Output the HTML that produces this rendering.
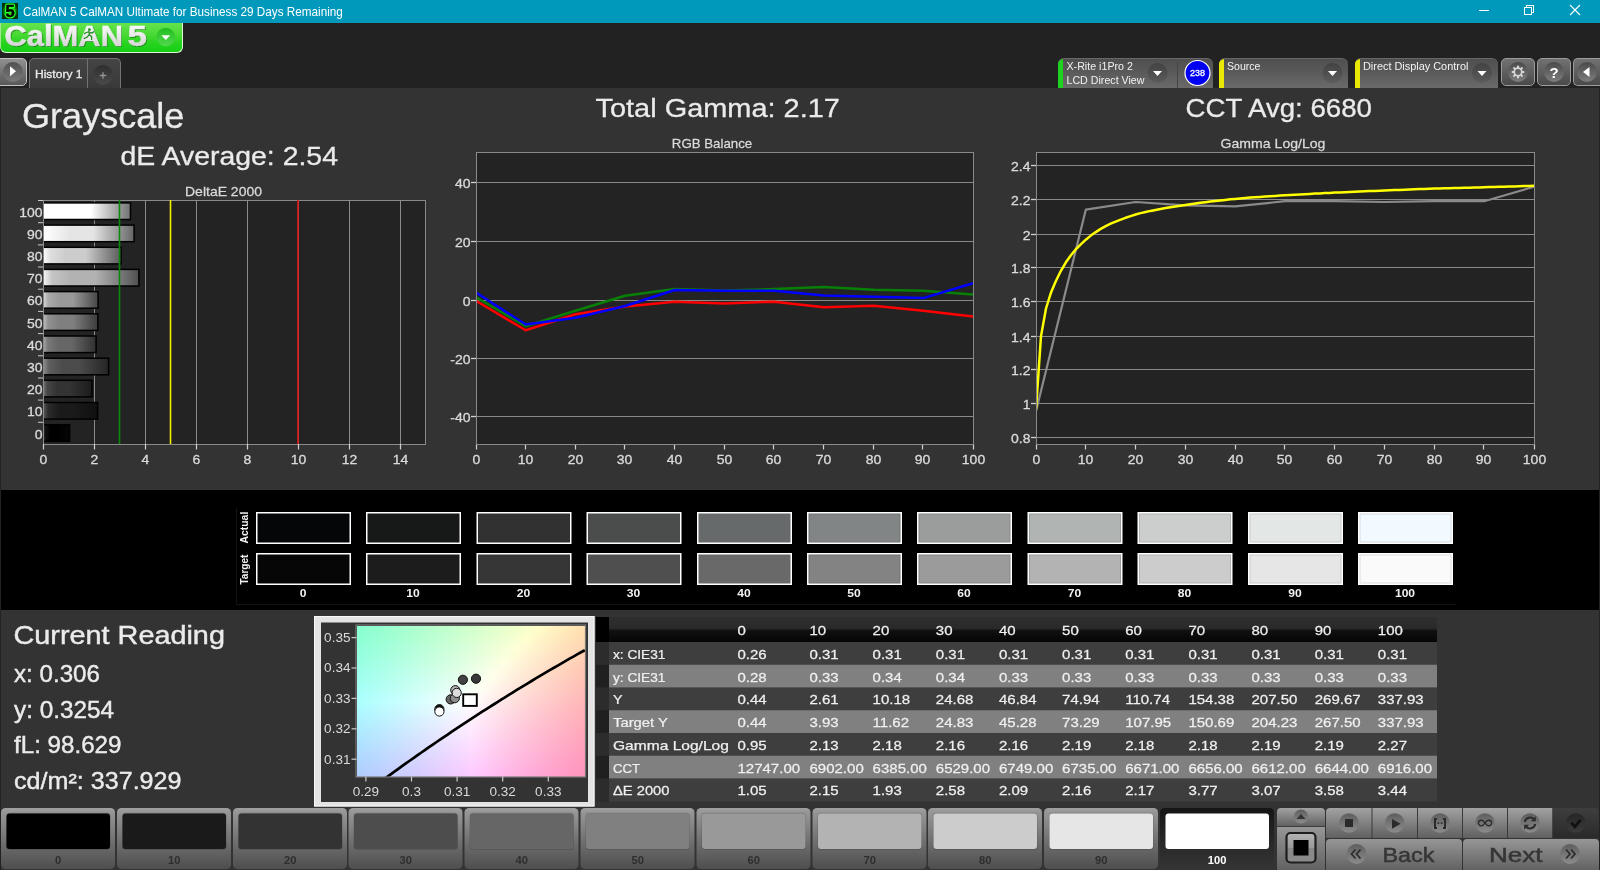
<!DOCTYPE html>
<html><head><meta charset="utf-8"><title>CalMAN 5</title>
<style>
*{margin:0;padding:0;box-sizing:border-box}
html,body{width:1600px;height:870px;overflow:hidden;background:#222222;font-family:"Liberation Sans",sans-serif;color:#e6e6e6}
.abs{position:absolute}
.t{position:absolute;white-space:nowrap;line-height:1}
svg{position:absolute;left:0;top:0;overflow:visible;will-change:transform}
#titlebar{position:absolute;left:0;top:0;width:1600px;height:23px;background:#0099bc}
#main{position:absolute;left:1px;top:88px;width:1598px;height:782px;background:#333}
#band{position:absolute;left:1px;top:490px;width:1598px;height:120px;background:#000}
</style></head><body>
<div id="titlebar"></div>
<div id="main"></div>
<div id="band"></div>
<!-- title bar + toolbar -->
<style>
.dtab{position:absolute;top:58px;height:30px;border-radius:6px 6px 0 0;background:linear-gradient(#4f4f4f 0%,#5b5b5b 50%,#6a6a6a 100%);border-top:1px solid #686868;overflow:hidden}
.dtab i{position:absolute;left:0;top:-1px;width:5px;height:32px}
.tbtn{position:absolute;top:58px;height:28px;border-radius:5px;background:linear-gradient(#727272,#4a4a4a);border:1px solid #9c9c9c}
</style>
<div class="abs" style="left:0;top:23px;width:183px;height:30px;border-radius:0 0 6px 6px;background:linear-gradient(#66e34e 0%,#48d934 40%,#22d21c 75%,#16cf16 100%);border:1px solid #dcf7d4;border-top:none;border-left:1px solid #9fe890"></div>
<div class="abs" style="left:-4px;top:58px;width:31px;height:28px;border-radius:5px;background:linear-gradient(#909090,#585858);border:1px solid #c4c4c4"></div>
<div class="abs" style="left:29px;top:58px;width:92px;height:30px;border-radius:5px 5px 0 0;background:linear-gradient(#454545,#393939);border:1px solid #727272;border-bottom:none"></div>
<div class="abs" style="left:87px;top:59px;width:1px;height:29px;background:#727272"></div>
<div class="dtab" style="left:1058px;width:155px"><i style="background:#1fd11f"></i></div>
<div class="abs" style="left:1177px;top:62px;width:1px;height:26px;background:#454545"></div>
<div class="dtab" style="left:1219px;width:129px"><i style="background:#e8e800"></i></div>
<div class="dtab" style="left:1355px;width:143px"><i style="background:#e8e800"></i></div>
<div class="tbtn" style="left:1501px;width:34px"></div>
<div class="tbtn" style="left:1537px;width:34px"></div>
<div class="tbtn" style="left:1573px;width:27px;border-right:none;border-radius:5px 0 0 5px"></div>
<svg width="1600" height="90" font-family="Liberation Sans" fill="#f2f2f2">
<defs>
<linearGradient id="lg" x1="0" x2="0" y1="0" y2="1"><stop offset="0" stop-color="#ffffff"/><stop offset=".45" stop-color="#ececec"/><stop offset="1" stop-color="#c9c9c9"/></linearGradient>
<linearGradient id="dc" x1="0" x2="0" y1="0" y2="1"><stop offset="0" stop-color="#424242"/><stop offset="1" stop-color="#5c5c5c"/></linearGradient>
<linearGradient id="bc" x1="0" x2="0" y1="0" y2="1"><stop offset="0" stop-color="#4a4a4a"/><stop offset="1" stop-color="#7e7e7e"/></linearGradient>
<linearGradient id="pc" x1="0" x2="0" y1="0" y2="1"><stop offset="0" stop-color="#2e2e2e"/><stop offset="1" stop-color="#4a4a4a"/></linearGradient>
<radialGradient id="ig"><stop offset="0" stop-color="#20ff20"/><stop offset=".6" stop-color="#12c812"/><stop offset="1" stop-color="#053a05"/></radialGradient>
</defs>
<rect x="2" y="3" width="16" height="16" fill="#021002"/><rect x="2" y="3" width="16" height="16" fill="url(#ig)" opacity=".8"/>
<text x="10" y="17.3" font-weight="bold" font-size="16.5" fill="#28ff28" text-anchor="middle" stroke="#28ff28" stroke-width="3" stroke-linejoin="round">5</text>
<text x="10" y="17.3" font-weight="bold" font-size="16.5" fill="#000" stroke="#000" stroke-width=".5" text-anchor="middle">5</text>
<text transform="translate(23 15.8) scale(0.977 1)" font-size="12" fill="#fff">CalMAN 5 CalMAN Ultimate for Business 29 Days Remaining</text>
<g stroke="#fff" stroke-width="1" fill="none" shape-rendering="crispEdges">
<line x1="1479" y1="10.5" x2="1489" y2="10.5"/><rect x="1524.5" y="7.5" width="7" height="7"/>
<polyline points="1526.5,7.5 1526.5,5.5 1533.5,5.5 1533.5,12.5 1531.5,12.5"/></g>
<g stroke="#fff" stroke-width="1.1" fill="none"><line x1="1570" y1="5" x2="1580" y2="15"/><line x1="1580" y1="5" x2="1570" y2="15"/></g>
<text transform="translate(5.7 47.1) scale(1.066 1)" font-size="29" fill="#145c10" font-weight="bold" opacity="0.5">CalMAN</text>
<text transform="translate(128.7 47.1) scale(1.209 1)" font-size="29" fill="#145c10" font-weight="bold" opacity="0.5">5</text>
<text transform="translate(4.8 47.4) scale(1.066 1)" font-size="29" fill="#145c10" font-weight="bold" opacity="0.35">CalMAN</text>
<text transform="translate(127.8 47.4) scale(1.209 1)" font-size="29" fill="#145c10" font-weight="bold" opacity="0.35">5</text>
<text transform="translate(4.5 45.8) scale(1.066 1)" font-size="29" fill="url(#lg)" font-weight="bold" stroke="url(#lg)" stroke-width=".5">CalMAN</text>
<text transform="translate(127.5 45.8) scale(1.209 1)" font-size="29" fill="url(#lg)" font-weight="bold" stroke="url(#lg)" stroke-width=".5">5</text>
<path d="M89.5 27.500L84.8 40.800h9.600z" fill="#ececec"/>
<g fill="none" stroke="#1f8f1f" stroke-width="1.3" stroke-linecap="round" stroke-linejoin="round"><path d="M89 31.600l.4 3.300M88 32l-2.8 1l-.5 .7M89.4 32.300l2.5 .8l2-1.400M89 34.900l-1.9 2.300l-2.9 1.300M89.4 34.900l2.2 1.600v2.9"/></g><circle cx="89.4" cy="29.7" r="1.4" fill="#1f8f1f"/>
<defs><linearGradient id="dg" x1="0" x2="0" y1="0" y2="1"><stop offset="0" stop-color="#1fbd1f"/><stop offset="1" stop-color="#52d94e"/></linearGradient></defs>
<circle cx="165.8" cy="37" r="9.3" fill="url(#dg)"/><path d="M161.3 35.300h9l-4.5 4.800z" fill="#fff"/>
<circle cx="13" cy="72" r="10" fill="url(#bc)" opacity=".9"/><path d="M10 66.300v10l6-5z" fill="#fff"/>
<text transform="translate(35 78.2) scale(1.065 1)" font-size="11.3" fill="#ececec" stroke="#ececec" stroke-width=".3">History 1</text>
<circle cx="103" cy="75" r="10" fill="url(#pc)"/><path d="M99.8 75.500h6.400M103 72.300v6.4" stroke="#949494" stroke-width="1.3"/>
<text transform="translate(1066.5 69.7) scale(1.068 1)" font-size="10">X-Rite i1Pro 2</text>
<text transform="translate(1066.5 83.8) scale(1.066 1)" font-size="10">LCD Direct View</text>
<text transform="translate(1227 69.7) scale(1.057 1)" font-size="10">Source</text>
<text transform="translate(1363 69.6) scale(1.091 1)" font-size="10">Direct Display Control</text>
<g fill="url(#dc)"><circle cx="1157.5" cy="73" r="10"/><circle cx="1332.5" cy="73" r="10"/><circle cx="1482" cy="73" r="10"/></g>
<g fill="#fff"><path d="M1153 71h9l-4.5 5z"/><path d="M1328 71h9l-4.5 5z"/><path d="M1477.5 71h9l-4.5 5z"/></g>
<circle cx="1197.5" cy="73" r="12.5" fill="#0000f2" stroke="#fff" stroke-width="1.2"/>
<text transform="translate(1197.5 76.2) scale(1.0 1)" font-size="9" text-anchor="middle" fill="#fff" stroke="#fff" stroke-width=".3">238</text>
<g fill="url(#bc)"><circle cx="1518" cy="72" r="10"/><circle cx="1554" cy="72" r="10"/><circle cx="1587" cy="72" r="10"/></g>
<g transform="translate(1518,72) scale(.9)" fill="none" stroke="#d6d6d6"><circle r="4.2" stroke-width="2"/>
<g stroke-width="2.3"><line y1="-4.5" y2="-7"/><line y1="4.5" y2="7"/><line x1="-4.5" x2="-7"/><line x1="4.5" x2="7"/>
<line x1="3.2" y1="3.2" x2="5" y2="5"/><line x1="-3.2" y1="3.2" x2="-5" y2="5"/><line x1="3.2" y1="-3.2" x2="5" y2="-5"/><line x1="-3.2" y1="-3.2" x2="-5" y2="-5"/></g></g>
<text x="1554" y="77.5" font-weight="bold" font-size="15" fill="#fff" text-anchor="middle">?</text>
<path d="M1589.5 67v10l-6.5-5z" fill="#fff"/>
</svg>
<svg width="1600" height="870" font-family="Liberation Sans" font-size="12" fill="#dadada">
<text transform="translate(22 128) scale(1.031 1)" font-size="35" fill="#ebebeb" stroke="#ebebeb" stroke-width=".3">Grayscale</text>
<text transform="translate(120.5 164.5) scale(1.137 1)" font-size="25" fill="#ebebeb" stroke="#ebebeb" stroke-width=".3">dE Average: 2.54</text>
<text transform="translate(595.5 117.3) scale(1.113 1)" font-size="26" fill="#ebebeb" stroke="#ebebeb" stroke-width=".3">Total Gamma: 2.17</text>
<text transform="translate(1185.5 117.3) scale(1.063 1)" font-size="26" fill="#ebebeb" stroke="#ebebeb" stroke-width=".3">CCT Avg: 6680</text>
<rect x="43" y="200" width="382" height="244" fill="#232323"/>
<text transform="translate(223.5 196.3) scale(1.076 1)" font-size="13" text-anchor="middle" stroke="#dadada" stroke-width=".25">DeltaE 2000</text>
<line x1="94.5" y1="200" x2="94.5" y2="444" stroke="#8a8a8a" stroke-width="1"/>
<line x1="145.5" y1="200" x2="145.5" y2="444" stroke="#8a8a8a" stroke-width="1"/>
<line x1="196.5" y1="200" x2="196.5" y2="444" stroke="#8a8a8a" stroke-width="1"/>
<line x1="247.5" y1="200" x2="247.5" y2="444" stroke="#8a8a8a" stroke-width="1"/>
<line x1="298.5" y1="200" x2="298.5" y2="444" stroke="#8a8a8a" stroke-width="1"/>
<line x1="349.5" y1="200" x2="349.5" y2="444" stroke="#8a8a8a" stroke-width="1"/>
<line x1="400.5" y1="200" x2="400.5" y2="444" stroke="#8a8a8a" stroke-width="1"/>
<rect x="43.5" y="200.5" width="382" height="244" fill="none" stroke="#8a8a8a"/>
<defs>
<linearGradient id="b100" x1="0" x2="1" y1="0" y2="0"><stop offset="0" stop-color="rgb(255,255,255)"/><stop offset=".1" stop-color="rgb(255,255,255)"/><stop offset=".3" stop-color="rgb(255,255,255)"/><stop offset=".55" stop-color="rgb(255,255,255)"/><stop offset="1" stop-color="rgb(113,113,113)"/></linearGradient>
<linearGradient id="b90" x1="0" x2="1" y1="0" y2="0"><stop offset="0" stop-color="rgb(255,255,255)"/><stop offset=".1" stop-color="rgb(247,247,247)"/><stop offset=".3" stop-color="rgb(229,229,229)"/><stop offset=".55" stop-color="rgb(229,229,229)"/><stop offset="1" stop-color="rgb(102,102,102)"/></linearGradient>
<linearGradient id="b80" x1="0" x2="1" y1="0" y2="0"><stop offset="0" stop-color="rgb(255,255,255)"/><stop offset=".1" stop-color="rgb(222,222,222)"/><stop offset=".3" stop-color="rgb(204,204,204)"/><stop offset=".55" stop-color="rgb(204,204,204)"/><stop offset="1" stop-color="rgb(91,91,91)"/></linearGradient>
<linearGradient id="b70" x1="0" x2="1" y1="0" y2="0"><stop offset="0" stop-color="rgb(250,250,250)"/><stop offset=".1" stop-color="rgb(196,196,196)"/><stop offset=".3" stop-color="rgb(178,178,178)"/><stop offset=".55" stop-color="rgb(178,178,178)"/><stop offset="1" stop-color="rgb(80,80,80)"/></linearGradient>
<linearGradient id="b60" x1="0" x2="1" y1="0" y2="0"><stop offset="0" stop-color="rgb(225,225,225)"/><stop offset=".1" stop-color="rgb(171,171,171)"/><stop offset=".3" stop-color="rgb(153,153,153)"/><stop offset=".55" stop-color="rgb(153,153,153)"/><stop offset="1" stop-color="rgb(70,70,70)"/></linearGradient>
<linearGradient id="b50" x1="0" x2="1" y1="0" y2="0"><stop offset="0" stop-color="rgb(199,199,199)"/><stop offset=".1" stop-color="rgb(145,145,145)"/><stop offset=".3" stop-color="rgb(127,127,127)"/><stop offset=".55" stop-color="rgb(127,127,127)"/><stop offset="1" stop-color="rgb(59,59,59)"/></linearGradient>
<linearGradient id="b40" x1="0" x2="1" y1="0" y2="0"><stop offset="0" stop-color="rgb(174,174,174)"/><stop offset=".1" stop-color="rgb(120,120,120)"/><stop offset=".3" stop-color="rgb(102,102,102)"/><stop offset=".55" stop-color="rgb(102,102,102)"/><stop offset="1" stop-color="rgb(48,48,48)"/></linearGradient>
<linearGradient id="b30" x1="0" x2="1" y1="0" y2="0"><stop offset="0" stop-color="rgb(148,148,148)"/><stop offset=".1" stop-color="rgb(94,94,94)"/><stop offset=".3" stop-color="rgb(76,76,76)"/><stop offset=".55" stop-color="rgb(76,76,76)"/><stop offset="1" stop-color="rgb(37,37,37)"/></linearGradient>
<linearGradient id="b20" x1="0" x2="1" y1="0" y2="0"><stop offset="0" stop-color="rgb(123,123,123)"/><stop offset=".1" stop-color="rgb(69,69,69)"/><stop offset=".3" stop-color="rgb(51,51,51)"/><stop offset=".55" stop-color="rgb(51,51,51)"/><stop offset="1" stop-color="rgb(27,27,27)"/></linearGradient>
<linearGradient id="b10" x1="0" x2="1" y1="0" y2="0"><stop offset="0" stop-color="rgb(98,98,98)"/><stop offset=".1" stop-color="rgb(44,44,44)"/><stop offset=".3" stop-color="rgb(26,26,26)"/><stop offset=".55" stop-color="rgb(26,26,26)"/><stop offset="1" stop-color="rgb(16,16,16)"/></linearGradient>
<linearGradient id="b0" x1="0" x2="1" y1="0" y2="0"><stop offset="0" stop-color="rgb(72,72,72)"/><stop offset=".1" stop-color="rgb(18,18,18)"/><stop offset=".3" stop-color="rgb(0,0,0)"/><stop offset=".55" stop-color="rgb(0,0,0)"/><stop offset="1" stop-color="rgb(6,6,6)"/></linearGradient>
</defs>
<clipPath id="cD"><rect x="44" y="200" width="382" height="244"/></clipPath>
<rect clip-path="url(#cD)" x="42.5" y="202.9" width="88.0" height="16.6" fill="url(#b100)" stroke="#000" stroke-width="1.5"/>
<text transform="translate(42.5 216.691) scale(1.120 1)" font-size="12.5" text-anchor="end" stroke="#dadada" stroke-width=".3">100</text>
<line x1="38" y1="200.5" x2="43" y2="200.5" stroke="#ccc"/>
<rect clip-path="url(#cD)" x="42.5" y="225.1" width="91.6" height="16.6" fill="url(#b90)" stroke="#000" stroke-width="1.5"/>
<text transform="translate(42.5 238.873) scale(1.120 1)" font-size="12.5" text-anchor="end" stroke="#dadada" stroke-width=".3">90</text>
<line x1="38" y1="222.7" x2="43" y2="222.7" stroke="#ccc"/>
<rect clip-path="url(#cD)" x="42.5" y="247.3" width="78.6" height="16.6" fill="url(#b80)" stroke="#000" stroke-width="1.5"/>
<text transform="translate(42.5 261.055) scale(1.120 1)" font-size="12.5" text-anchor="end" stroke="#dadada" stroke-width=".3">80</text>
<line x1="38" y1="244.9" x2="43" y2="244.9" stroke="#ccc"/>
<rect clip-path="url(#cD)" x="42.5" y="269.4" width="96.4" height="16.6" fill="url(#b70)" stroke="#000" stroke-width="1.5"/>
<text transform="translate(42.5 283.236) scale(1.120 1)" font-size="12.5" text-anchor="end" stroke="#dadada" stroke-width=".3">70</text>
<line x1="38" y1="267.0" x2="43" y2="267.0" stroke="#ccc"/>
<rect clip-path="url(#cD)" x="42.5" y="291.6" width="55.6" height="16.6" fill="url(#b60)" stroke="#000" stroke-width="1.5"/>
<text transform="translate(42.5 305.418) scale(1.120 1)" font-size="12.5" text-anchor="end" stroke="#dadada" stroke-width=".3">60</text>
<line x1="38" y1="289.2" x2="43" y2="289.2" stroke="#ccc"/>
<rect clip-path="url(#cD)" x="42.5" y="313.8" width="55.4" height="16.6" fill="url(#b50)" stroke="#000" stroke-width="1.5"/>
<text transform="translate(42.5 327.6) scale(1.120 1)" font-size="12.5" text-anchor="end" stroke="#dadada" stroke-width=".3">50</text>
<line x1="38" y1="311.4" x2="43" y2="311.4" stroke="#ccc"/>
<rect clip-path="url(#cD)" x="42.5" y="336.0" width="53.6" height="16.6" fill="url(#b40)" stroke="#000" stroke-width="1.5"/>
<text transform="translate(42.5 349.782) scale(1.120 1)" font-size="12.5" text-anchor="end" stroke="#dadada" stroke-width=".3">40</text>
<line x1="38" y1="333.6" x2="43" y2="333.6" stroke="#ccc"/>
<rect clip-path="url(#cD)" x="42.5" y="358.2" width="66.1" height="16.6" fill="url(#b30)" stroke="#000" stroke-width="1.5"/>
<text transform="translate(42.5 371.964) scale(1.120 1)" font-size="12.5" text-anchor="end" stroke="#dadada" stroke-width=".3">30</text>
<line x1="38" y1="355.8" x2="43" y2="355.8" stroke="#ccc"/>
<rect clip-path="url(#cD)" x="42.5" y="380.3" width="49.5" height="16.6" fill="url(#b20)" stroke="#000" stroke-width="1.5"/>
<text transform="translate(42.5 394.145) scale(1.120 1)" font-size="12.5" text-anchor="end" stroke="#dadada" stroke-width=".3">20</text>
<line x1="38" y1="378.0" x2="43" y2="378.0" stroke="#ccc"/>
<rect clip-path="url(#cD)" x="42.5" y="402.5" width="55.1" height="16.6" fill="url(#b10)" stroke="#000" stroke-width="1.5"/>
<text transform="translate(42.5 416.327) scale(1.120 1)" font-size="12.5" text-anchor="end" stroke="#dadada" stroke-width=".3">10</text>
<line x1="38" y1="400.1" x2="43" y2="400.1" stroke="#ccc"/>
<rect clip-path="url(#cD)" x="42.5" y="424.7" width="27.1" height="16.6" fill="url(#b0)" stroke="#000" stroke-width="1.5"/>
<text transform="translate(42.5 438.509) scale(1.120 1)" font-size="12.5" text-anchor="end" stroke="#dadada" stroke-width=".3">0</text>
<line x1="38" y1="422.3" x2="43" y2="422.3" stroke="#ccc"/>
<line x1="119.5" y1="200" x2="119.5" y2="444" stroke="#0a8a0a" stroke-width="1.6"/>
<line x1="170.5" y1="200" x2="170.5" y2="444" stroke="#f0f000" stroke-width="1.6"/>
<line x1="298.0" y1="200" x2="298.0" y2="444" stroke="#e01818" stroke-width="1.6"/>
<line x1="43.5" y1="444" x2="43.5" y2="449.5" stroke="#d0d0d0" stroke-width="1.2"/>
<text transform="translate(43.5 464) scale(1.120 1)" font-size="12.5" text-anchor="middle" stroke="#dadada" stroke-width=".3">0</text>
<line x1="94.5" y1="444" x2="94.5" y2="449.5" stroke="#d0d0d0" stroke-width="1.2"/>
<text transform="translate(94.5 464) scale(1.120 1)" font-size="12.5" text-anchor="middle" stroke="#dadada" stroke-width=".3">2</text>
<line x1="145.5" y1="444" x2="145.5" y2="449.5" stroke="#d0d0d0" stroke-width="1.2"/>
<text transform="translate(145.5 464) scale(1.120 1)" font-size="12.5" text-anchor="middle" stroke="#dadada" stroke-width=".3">4</text>
<line x1="196.5" y1="444" x2="196.5" y2="449.5" stroke="#d0d0d0" stroke-width="1.2"/>
<text transform="translate(196.5 464) scale(1.120 1)" font-size="12.5" text-anchor="middle" stroke="#dadada" stroke-width=".3">6</text>
<line x1="247.5" y1="444" x2="247.5" y2="449.5" stroke="#d0d0d0" stroke-width="1.2"/>
<text transform="translate(247.5 464) scale(1.120 1)" font-size="12.5" text-anchor="middle" stroke="#dadada" stroke-width=".3">8</text>
<line x1="298.5" y1="444" x2="298.5" y2="449.5" stroke="#d0d0d0" stroke-width="1.2"/>
<text transform="translate(298.5 464) scale(1.120 1)" font-size="12.5" text-anchor="middle" stroke="#dadada" stroke-width=".3">10</text>
<line x1="349.5" y1="444" x2="349.5" y2="449.5" stroke="#d0d0d0" stroke-width="1.2"/>
<text transform="translate(349.5 464) scale(1.120 1)" font-size="12.5" text-anchor="middle" stroke="#dadada" stroke-width=".3">12</text>
<line x1="400.5" y1="444" x2="400.5" y2="449.5" stroke="#d0d0d0" stroke-width="1.2"/>
<text transform="translate(400.5 464) scale(1.120 1)" font-size="12.5" text-anchor="middle" stroke="#dadada" stroke-width=".3">14</text>
<rect x="476" y="152" width="497" height="292" fill="#232323"/>
<text transform="translate(712 148.3) scale(1.022 1)" font-size="13" text-anchor="middle" stroke="#dadada" stroke-width=".25">RGB Balance</text>
<line x1="476" y1="182.5" x2="973" y2="182.5" stroke="#8a8a8a"/>
<line x1="471" y1="182.5" x2="476" y2="182.5" stroke="#d0d0d0" stroke-width="1.3"/>
<text transform="translate(470.5 187.7) scale(1.120 1)" font-size="12.5" text-anchor="end" stroke="#dadada" stroke-width=".3">40</text>
<line x1="476" y1="241.5" x2="973" y2="241.5" stroke="#8a8a8a"/>
<line x1="471" y1="241.5" x2="476" y2="241.5" stroke="#d0d0d0" stroke-width="1.3"/>
<text transform="translate(470.5 246.7) scale(1.120 1)" font-size="12.5" text-anchor="end" stroke="#dadada" stroke-width=".3">20</text>
<line x1="476" y1="300.5" x2="973" y2="300.5" stroke="#8a8a8a"/>
<line x1="471" y1="300.5" x2="476" y2="300.5" stroke="#d0d0d0" stroke-width="1.3"/>
<text transform="translate(470.5 305.7) scale(1.120 1)" font-size="12.5" text-anchor="end" stroke="#dadada" stroke-width=".3">0</text>
<line x1="476" y1="358.5" x2="973" y2="358.5" stroke="#8a8a8a"/>
<line x1="471" y1="358.5" x2="476" y2="358.5" stroke="#d0d0d0" stroke-width="1.3"/>
<text transform="translate(470.5 363.7) scale(1.120 1)" font-size="12.5" text-anchor="end" stroke="#dadada" stroke-width=".3">-20</text>
<line x1="476" y1="416.5" x2="973" y2="416.5" stroke="#8a8a8a"/>
<line x1="471" y1="416.5" x2="476" y2="416.5" stroke="#d0d0d0" stroke-width="1.3"/>
<text transform="translate(470.5 421.7) scale(1.120 1)" font-size="12.5" text-anchor="end" stroke="#dadada" stroke-width=".3">-40</text>
<line x1="476.5" y1="444" x2="476.5" y2="449.5" stroke="#d0d0d0" stroke-width="1.2"/>
<text transform="translate(476.5 464) scale(1.120 1)" font-size="12.5" text-anchor="middle" stroke="#dadada" stroke-width=".3">0</text>
<line x1="525.5" y1="444" x2="525.5" y2="449.5" stroke="#d0d0d0" stroke-width="1.2"/>
<text transform="translate(525.5 464) scale(1.120 1)" font-size="12.5" text-anchor="middle" stroke="#dadada" stroke-width=".3">10</text>
<line x1="575.5" y1="444" x2="575.5" y2="449.5" stroke="#d0d0d0" stroke-width="1.2"/>
<text transform="translate(575.5 464) scale(1.120 1)" font-size="12.5" text-anchor="middle" stroke="#dadada" stroke-width=".3">20</text>
<line x1="624.5" y1="444" x2="624.5" y2="449.5" stroke="#d0d0d0" stroke-width="1.2"/>
<text transform="translate(624.5 464) scale(1.120 1)" font-size="12.5" text-anchor="middle" stroke="#dadada" stroke-width=".3">30</text>
<line x1="674.5" y1="444" x2="674.5" y2="449.5" stroke="#d0d0d0" stroke-width="1.2"/>
<text transform="translate(674.5 464) scale(1.120 1)" font-size="12.5" text-anchor="middle" stroke="#dadada" stroke-width=".3">40</text>
<line x1="724.5" y1="444" x2="724.5" y2="449.5" stroke="#d0d0d0" stroke-width="1.2"/>
<text transform="translate(724.5 464) scale(1.120 1)" font-size="12.5" text-anchor="middle" stroke="#dadada" stroke-width=".3">50</text>
<line x1="773.5" y1="444" x2="773.5" y2="449.5" stroke="#d0d0d0" stroke-width="1.2"/>
<text transform="translate(773.5 464) scale(1.120 1)" font-size="12.5" text-anchor="middle" stroke="#dadada" stroke-width=".3">60</text>
<line x1="823.5" y1="444" x2="823.5" y2="449.5" stroke="#d0d0d0" stroke-width="1.2"/>
<text transform="translate(823.5 464) scale(1.120 1)" font-size="12.5" text-anchor="middle" stroke="#dadada" stroke-width=".3">70</text>
<line x1="873.5" y1="444" x2="873.5" y2="449.5" stroke="#d0d0d0" stroke-width="1.2"/>
<text transform="translate(873.5 464) scale(1.120 1)" font-size="12.5" text-anchor="middle" stroke="#dadada" stroke-width=".3">80</text>
<line x1="922.5" y1="444" x2="922.5" y2="449.5" stroke="#d0d0d0" stroke-width="1.2"/>
<text transform="translate(922.5 464) scale(1.120 1)" font-size="12.5" text-anchor="middle" stroke="#dadada" stroke-width=".3">90</text>
<line x1="973.5" y1="444" x2="973.5" y2="449.5" stroke="#d0d0d0" stroke-width="1.2"/>
<text transform="translate(973.5 464) scale(1.120 1)" font-size="12.5" text-anchor="middle" stroke="#dadada" stroke-width=".3">100</text>
<clipPath id="cR"><rect x="476" y="152" width="498" height="292"/></clipPath>
<polyline clip-path="url(#cR)" points="476.0,297.3 525.7,326.2 575.4,310.7 625.1,295.8 674.8,289.1 724.5,290.5 774.2,289.1 823.9,287.0 873.6,289.7 923.3,290.8 973.0,294.6" fill="none" stroke="#088008" stroke-width="2.5" stroke-linejoin="round"/>
<polyline clip-path="url(#cR)" points="476.0,300.8 525.7,330.3 575.4,314.2 625.1,306.6 674.8,301.7 724.5,303.4 774.2,301.7 823.9,307.2 873.6,305.8 923.3,310.7 973.0,316.6" fill="none" stroke="#ff0000" stroke-width="2.5" stroke-linejoin="round"/>
<polyline clip-path="url(#cR)" points="476.0,292.6 525.7,324.5 575.4,317.7 625.1,306.0 674.8,290.0 724.5,290.8 774.2,290.8 823.9,295.5 873.6,296.7 923.3,298.1 973.0,283.2" fill="none" stroke="#0000ff" stroke-width="2.5" stroke-linejoin="round"/>
<rect x="476.5" y="152.5" width="497" height="292" fill="none" stroke="#8a8a8a"/>
<rect x="1036" y="152" width="498" height="292" fill="#232323"/>
<text transform="translate(1273 148.3) scale(1.084 1)" font-size="13" text-anchor="middle" stroke="#dadada" stroke-width=".25">Gamma Log/Log</text>
<line x1="1036" y1="165.5" x2="1534" y2="165.5" stroke="#8a8a8a"/>
<line x1="1031" y1="165.5" x2="1036" y2="165.5" stroke="#d0d0d0" stroke-width="1.3"/>
<text transform="translate(1030.5 170.7) scale(1.120 1)" font-size="12.5" text-anchor="end" stroke="#dadada" stroke-width=".3">2.4</text>
<line x1="1036" y1="199.5" x2="1534" y2="199.5" stroke="#8a8a8a"/>
<line x1="1031" y1="199.5" x2="1036" y2="199.5" stroke="#d0d0d0" stroke-width="1.3"/>
<text transform="translate(1030.5 204.7) scale(1.120 1)" font-size="12.5" text-anchor="end" stroke="#dadada" stroke-width=".3">2.2</text>
<line x1="1036" y1="234.5" x2="1534" y2="234.5" stroke="#8a8a8a"/>
<line x1="1031" y1="234.5" x2="1036" y2="234.5" stroke="#d0d0d0" stroke-width="1.3"/>
<text transform="translate(1030.5 239.7) scale(1.120 1)" font-size="12.5" text-anchor="end" stroke="#dadada" stroke-width=".3">2</text>
<line x1="1036" y1="267.5" x2="1534" y2="267.5" stroke="#8a8a8a"/>
<line x1="1031" y1="267.5" x2="1036" y2="267.5" stroke="#d0d0d0" stroke-width="1.3"/>
<text transform="translate(1030.5 272.7) scale(1.120 1)" font-size="12.5" text-anchor="end" stroke="#dadada" stroke-width=".3">1.8</text>
<line x1="1036" y1="301.5" x2="1534" y2="301.5" stroke="#8a8a8a"/>
<line x1="1031" y1="301.5" x2="1036" y2="301.5" stroke="#d0d0d0" stroke-width="1.3"/>
<text transform="translate(1030.5 306.7) scale(1.120 1)" font-size="12.5" text-anchor="end" stroke="#dadada" stroke-width=".3">1.6</text>
<line x1="1036" y1="336.5" x2="1534" y2="336.5" stroke="#8a8a8a"/>
<line x1="1031" y1="336.5" x2="1036" y2="336.5" stroke="#d0d0d0" stroke-width="1.3"/>
<text transform="translate(1030.5 341.7) scale(1.120 1)" font-size="12.5" text-anchor="end" stroke="#dadada" stroke-width=".3">1.4</text>
<line x1="1036" y1="369.5" x2="1534" y2="369.5" stroke="#8a8a8a"/>
<line x1="1031" y1="369.5" x2="1036" y2="369.5" stroke="#d0d0d0" stroke-width="1.3"/>
<text transform="translate(1030.5 374.7) scale(1.120 1)" font-size="12.5" text-anchor="end" stroke="#dadada" stroke-width=".3">1.2</text>
<line x1="1036" y1="403.5" x2="1534" y2="403.5" stroke="#8a8a8a"/>
<line x1="1031" y1="403.5" x2="1036" y2="403.5" stroke="#d0d0d0" stroke-width="1.3"/>
<text transform="translate(1030.5 408.7) scale(1.120 1)" font-size="12.5" text-anchor="end" stroke="#dadada" stroke-width=".3">1</text>
<line x1="1036" y1="437.5" x2="1534" y2="437.5" stroke="#8a8a8a"/>
<line x1="1031" y1="437.5" x2="1036" y2="437.5" stroke="#d0d0d0" stroke-width="1.3"/>
<text transform="translate(1030.5 442.7) scale(1.120 1)" font-size="12.5" text-anchor="end" stroke="#dadada" stroke-width=".3">0.8</text>
<line x1="1036.5" y1="444" x2="1036.5" y2="449.5" stroke="#d0d0d0" stroke-width="1.2"/>
<text transform="translate(1036.5 464) scale(1.120 1)" font-size="12.5" text-anchor="middle" stroke="#dadada" stroke-width=".3">0</text>
<line x1="1085.5" y1="444" x2="1085.5" y2="449.5" stroke="#d0d0d0" stroke-width="1.2"/>
<text transform="translate(1085.5 464) scale(1.120 1)" font-size="12.5" text-anchor="middle" stroke="#dadada" stroke-width=".3">10</text>
<line x1="1135.5" y1="444" x2="1135.5" y2="449.5" stroke="#d0d0d0" stroke-width="1.2"/>
<text transform="translate(1135.5 464) scale(1.120 1)" font-size="12.5" text-anchor="middle" stroke="#dadada" stroke-width=".3">20</text>
<line x1="1185.5" y1="444" x2="1185.5" y2="449.5" stroke="#d0d0d0" stroke-width="1.2"/>
<text transform="translate(1185.5 464) scale(1.120 1)" font-size="12.5" text-anchor="middle" stroke="#dadada" stroke-width=".3">30</text>
<line x1="1235.5" y1="444" x2="1235.5" y2="449.5" stroke="#d0d0d0" stroke-width="1.2"/>
<text transform="translate(1235.5 464) scale(1.120 1)" font-size="12.5" text-anchor="middle" stroke="#dadada" stroke-width=".3">40</text>
<line x1="1284.5" y1="444" x2="1284.5" y2="449.5" stroke="#d0d0d0" stroke-width="1.2"/>
<text transform="translate(1284.5 464) scale(1.120 1)" font-size="12.5" text-anchor="middle" stroke="#dadada" stroke-width=".3">50</text>
<line x1="1334.5" y1="444" x2="1334.5" y2="449.5" stroke="#d0d0d0" stroke-width="1.2"/>
<text transform="translate(1334.5 464) scale(1.120 1)" font-size="12.5" text-anchor="middle" stroke="#dadada" stroke-width=".3">60</text>
<line x1="1384.5" y1="444" x2="1384.5" y2="449.5" stroke="#d0d0d0" stroke-width="1.2"/>
<text transform="translate(1384.5 464) scale(1.120 1)" font-size="12.5" text-anchor="middle" stroke="#dadada" stroke-width=".3">70</text>
<line x1="1434.5" y1="444" x2="1434.5" y2="449.5" stroke="#d0d0d0" stroke-width="1.2"/>
<text transform="translate(1434.5 464) scale(1.120 1)" font-size="12.5" text-anchor="middle" stroke="#dadada" stroke-width=".3">80</text>
<line x1="1483.5" y1="444" x2="1483.5" y2="449.5" stroke="#d0d0d0" stroke-width="1.2"/>
<text transform="translate(1483.5 464) scale(1.120 1)" font-size="12.5" text-anchor="middle" stroke="#dadada" stroke-width=".3">90</text>
<line x1="1534.5" y1="444" x2="1534.5" y2="449.5" stroke="#d0d0d0" stroke-width="1.2"/>
<text transform="translate(1534.5 464) scale(1.120 1)" font-size="12.5" text-anchor="middle" stroke="#dadada" stroke-width=".3">100</text>
<clipPath id="cG"><rect x="1036" y="152" width="499" height="292"/></clipPath>
<polyline clip-path="url(#cG)" points="1036.0,411.2 1085.8,209.7 1135.6,202.0 1185.4,205.4 1235.2,206.3 1285.0,201.2 1334.8,201.2 1384.6,202.0 1434.4,201.2 1484.2,201.2 1534.0,186.8" fill="none" stroke="#8a8a8a" stroke-width="2.2" stroke-linejoin="round"/>
<polyline clip-path="url(#cG)" points="1036.0,409.1 1041.0,336.1 1046.0,308.5 1050.9,292.8 1055.9,281.0 1060.9,270.8 1065.9,262.3 1070.9,255.2 1075.8,249.4 1080.8,244.3 1085.8,239.7 1090.8,235.6 1095.8,232.1 1100.7,228.9 1105.7,226.1 1110.7,223.7 1115.7,221.6 1120.7,219.6 1125.6,217.8 1130.6,216.1 1135.6,214.5 1140.6,213.1 1145.6,212.0 1150.5,210.9 1155.5,209.9 1160.5,209.0 1165.5,208.1 1170.5,207.2 1175.4,206.4 1180.4,205.7 1185.4,205.0 1190.4,204.2 1195.4,203.5 1200.3,202.8 1205.3,202.2 1210.3,201.6 1215.3,201.0 1220.3,200.4 1225.2,199.9 1230.2,199.3 1235.2,198.9 1240.2,198.4 1245.2,198.0 1250.1,197.6 1255.1,197.3 1260.1,196.9 1265.1,196.6 1270.1,196.2 1275.0,195.9 1280.0,195.6 1285.0,195.3 1290.0,195.1 1295.0,194.8 1299.9,194.5 1304.9,194.2 1309.9,193.9 1314.9,193.6 1319.9,193.4 1324.8,193.1 1329.8,192.9 1334.8,192.6 1339.8,192.4 1344.8,192.2 1349.7,192.0 1354.7,191.7 1359.7,191.5 1364.7,191.3 1369.7,191.1 1374.6,190.9 1379.6,190.7 1384.6,190.5 1389.6,190.3 1394.6,190.1 1399.5,189.9 1404.5,189.7 1409.5,189.5 1414.5,189.3 1419.5,189.1 1424.4,188.9 1429.4,188.8 1434.4,188.6 1439.4,188.4 1444.4,188.3 1449.3,188.2 1454.3,188.0 1459.3,187.9 1464.3,187.8 1469.3,187.7 1474.2,187.5 1479.2,187.4 1484.2,187.3 1489.2,187.1 1494.2,187.0 1499.1,186.8 1504.1,186.7 1509.1,186.5 1514.1,186.4 1519.1,186.2 1524.0,186.1 1529.0,185.9 1534.0,185.8" fill="none" stroke="#ffff00" stroke-width="2.5" stroke-linejoin="round"/>
<rect x="1036.5" y="152.5" width="498" height="292" fill="none" stroke="#8a8a8a"/>
</svg>
<svg width="1600" height="870" font-family="Liberation Sans" font-size="12" fill="#e6e6e6">
<path d="M236.5 508V604.5H1456.5" fill="none" stroke="#141414"/>
<rect x="256.75" y="512.75" width="93.5" height="30.5" fill="#050608" stroke="#fff" stroke-width="1.5"/>
<rect x="256.75" y="553.75" width="93.5" height="30.5" fill="#060606" stroke="#fff" stroke-width="1.5"/>
<text transform="translate(303 597) scale(1.100 1)" font-size="11" text-anchor="middle" fill="#f2f2f2" font-weight="bold">0</text>
<rect x="366.75" y="512.75" width="93.5" height="30.5" fill="#171918" stroke="#fff" stroke-width="1.5"/>
<rect x="366.75" y="553.75" width="93.5" height="30.5" fill="#1c1c1c" stroke="#fff" stroke-width="1.5"/>
<text transform="translate(413 597) scale(1.100 1)" font-size="11" text-anchor="middle" fill="#f2f2f2" font-weight="bold">10</text>
<rect x="477.25" y="512.75" width="93.5" height="30.5" fill="#313131" stroke="#fff" stroke-width="1.5"/>
<rect x="477.25" y="553.75" width="93.5" height="30.5" fill="#363636" stroke="#fff" stroke-width="1.5"/>
<text transform="translate(523.5 597) scale(1.100 1)" font-size="11" text-anchor="middle" fill="#f2f2f2" font-weight="bold">20</text>
<rect x="587.25" y="512.75" width="93.5" height="30.5" fill="#4b4d4c" stroke="#fff" stroke-width="1.5"/>
<rect x="587.25" y="553.75" width="93.5" height="30.5" fill="#4f4f4f" stroke="#fff" stroke-width="1.5"/>
<text transform="translate(633.5 597) scale(1.100 1)" font-size="11" text-anchor="middle" fill="#f2f2f2" font-weight="bold">30</text>
<rect x="697.75" y="512.75" width="93.5" height="30.5" fill="#676a6a" stroke="#fff" stroke-width="1.5"/>
<rect x="697.75" y="553.75" width="93.5" height="30.5" fill="#696969" stroke="#fff" stroke-width="1.5"/>
<text transform="translate(744 597) scale(1.100 1)" font-size="11" text-anchor="middle" fill="#f2f2f2" font-weight="bold">40</text>
<rect x="807.75" y="512.75" width="93.5" height="30.5" fill="#828585" stroke="#fff" stroke-width="1.5"/>
<rect x="809" y="514" width="91" height="28" fill="none" stroke="#000" stroke-opacity=".12" stroke-width="1"/>
<rect x="807.75" y="553.75" width="93.5" height="30.5" fill="#838383" stroke="#fff" stroke-width="1.5"/>
<rect x="809" y="555" width="91" height="28" fill="none" stroke="#000" stroke-opacity=".12" stroke-width="1"/>
<text transform="translate(854 597) scale(1.100 1)" font-size="11" text-anchor="middle" fill="#f2f2f2" font-weight="bold">50</text>
<rect x="917.75" y="512.75" width="93.5" height="30.5" fill="#9a9d9c" stroke="#fff" stroke-width="1.5"/>
<rect x="919" y="514" width="91" height="28" fill="none" stroke="#000" stroke-opacity=".12" stroke-width="1"/>
<rect x="917.75" y="553.75" width="93.5" height="30.5" fill="#9b9b9b" stroke="#fff" stroke-width="1.5"/>
<rect x="919" y="555" width="91" height="28" fill="none" stroke="#000" stroke-opacity=".12" stroke-width="1"/>
<text transform="translate(964 597) scale(1.100 1)" font-size="11" text-anchor="middle" fill="#f2f2f2" font-weight="bold">60</text>
<rect x="1028.25" y="512.75" width="93.5" height="30.5" fill="#b0b4b2" stroke="#fff" stroke-width="1.5"/>
<rect x="1029.5" y="514" width="91" height="28" fill="none" stroke="#000" stroke-opacity=".12" stroke-width="1"/>
<rect x="1028.25" y="553.75" width="93.5" height="30.5" fill="#b3b3b3" stroke="#fff" stroke-width="1.5"/>
<rect x="1029.5" y="555" width="91" height="28" fill="none" stroke="#000" stroke-opacity=".12" stroke-width="1"/>
<text transform="translate(1074.5 597) scale(1.100 1)" font-size="11" text-anchor="middle" fill="#f2f2f2" font-weight="bold">70</text>
<rect x="1138.25" y="512.75" width="93.5" height="30.5" fill="#cbcecd" stroke="#fff" stroke-width="1.5"/>
<rect x="1139.5" y="514" width="91" height="28" fill="none" stroke="#000" stroke-opacity=".12" stroke-width="1"/>
<rect x="1138.25" y="553.75" width="93.5" height="30.5" fill="#cccccc" stroke="#fff" stroke-width="1.5"/>
<rect x="1139.5" y="555" width="91" height="28" fill="none" stroke="#000" stroke-opacity=".12" stroke-width="1"/>
<text transform="translate(1184.5 597) scale(1.100 1)" font-size="11" text-anchor="middle" fill="#f2f2f2" font-weight="bold">80</text>
<rect x="1248.75" y="512.75" width="93.5" height="30.5" fill="#e3e7e5" stroke="#fff" stroke-width="1.5"/>
<rect x="1250" y="514" width="91" height="28" fill="none" stroke="#000" stroke-opacity=".12" stroke-width="1"/>
<rect x="1248.75" y="553.75" width="93.5" height="30.5" fill="#e6e6e6" stroke="#fff" stroke-width="1.5"/>
<rect x="1250" y="555" width="91" height="28" fill="none" stroke="#000" stroke-opacity=".12" stroke-width="1"/>
<text transform="translate(1295 597) scale(1.100 1)" font-size="11" text-anchor="middle" fill="#f2f2f2" font-weight="bold">90</text>
<rect x="1358.75" y="512.75" width="93.5" height="30.5" fill="#f3faff" stroke="#fff" stroke-width="1.5"/>
<rect x="1360" y="514" width="91" height="28" fill="none" stroke="#000" stroke-opacity=".12" stroke-width="1"/>
<rect x="1358.75" y="553.75" width="93.5" height="30.5" fill="#fafafa" stroke="#fff" stroke-width="1.5"/>
<rect x="1360" y="555" width="91" height="28" fill="none" stroke="#000" stroke-opacity=".12" stroke-width="1"/>
<text transform="translate(1405 597) scale(1.100 1)" font-size="11" text-anchor="middle" fill="#f2f2f2" font-weight="bold">100</text>
<text transform="translate(247.8 543.5) rotate(-90) scale(1.02 1)" font-size="10.2" font-weight="bold" fill="#f2f2f2">Actual</text>
<text transform="translate(247.8 584.5) rotate(-90) scale(0.98 1)" font-size="10.2" font-weight="bold" fill="#f2f2f2">Target</text>
<text transform="translate(13.5 644) scale(1.153 1)" font-size="25" fill="#ebebeb" stroke="#ebebeb" stroke-width=".4">Current Reading</text>
<text transform="translate(14 681.5) scale(1.051 1)" font-size="23" fill="#ebebeb" stroke="#ebebeb" stroke-width=".4">x: 0.306</text>
<text transform="translate(14 717.5) scale(1.057 1)" font-size="23" fill="#ebebeb" stroke="#ebebeb" stroke-width=".4">y: 0.3254</text>
<text transform="translate(14 753) scale(1.051 1)" font-size="23" fill="#ebebeb" stroke="#ebebeb" stroke-width=".4">fL: 98.629</text>
<text transform="translate(14 789) scale(1.092 1)" font-size="23" fill="#ebebeb" stroke="#ebebeb" stroke-width=".4">cd/m²: 337.929</text>
<rect x="314" y="616" width="280.5" height="190.5" fill="#e4e4e4"/>
<rect x="314.5" y="616.5" width="279.5" height="189.5" fill="none" stroke="#f8f8f8" stroke-width="1"/>
<rect x="321" y="622.5" width="267" height="179.5" fill="#333"/>
</svg>
<svg width="1600" height="870" font-family="Liberation Sans" font-size="12" fill="#dadada">
<defs>
<linearGradient id="c0"><stop offset="0" stop-color="#87ffce"/><stop offset="0.05" stop-color="#8effce"/><stop offset="0.1" stop-color="#95ffce"/><stop offset="0.15" stop-color="#9cffce"/><stop offset="0.2" stop-color="#a3ffcd"/><stop offset="0.25" stop-color="#aaffcd"/><stop offset="0.3" stop-color="#b1ffcd"/><stop offset="0.35" stop-color="#b9ffcc"/><stop offset="0.4" stop-color="#c0ffcc"/><stop offset="0.45" stop-color="#c8ffcc"/><stop offset="0.5" stop-color="#d0ffcb"/><stop offset="0.55" stop-color="#d8ffcb"/><stop offset="0.6" stop-color="#e0ffcb"/><stop offset="0.65" stop-color="#e8ffca"/><stop offset="0.7" stop-color="#f0ffca"/><stop offset="0.75" stop-color="#f8ffca"/><stop offset="0.8" stop-color="#fffdc8"/><stop offset="0.85" stop-color="#fff5c1"/><stop offset="0.9" stop-color="#ffedbb"/><stop offset="0.95" stop-color="#ffe6b4"/><stop offset="1" stop-color="#ffdfaf"/></linearGradient>
<linearGradient id="c1"><stop offset="0" stop-color="#88ffd0"/><stop offset="0.05" stop-color="#8fffd0"/><stop offset="0.1" stop-color="#96ffd0"/><stop offset="0.15" stop-color="#9dffcf"/><stop offset="0.2" stop-color="#a4ffcf"/><stop offset="0.25" stop-color="#acffcf"/><stop offset="0.3" stop-color="#b3ffce"/><stop offset="0.35" stop-color="#bbffce"/><stop offset="0.4" stop-color="#c2ffce"/><stop offset="0.45" stop-color="#caffcd"/><stop offset="0.5" stop-color="#d2ffcd"/><stop offset="0.55" stop-color="#daffcd"/><stop offset="0.6" stop-color="#e2ffcc"/><stop offset="0.65" stop-color="#eaffcc"/><stop offset="0.7" stop-color="#f2ffcc"/><stop offset="0.75" stop-color="#faffcb"/><stop offset="0.8" stop-color="#fffbc8"/><stop offset="0.85" stop-color="#fff3c1"/><stop offset="0.9" stop-color="#ffecbb"/><stop offset="0.95" stop-color="#ffe4b5"/><stop offset="1" stop-color="#ffddaf"/></linearGradient>
<linearGradient id="c2"><stop offset="0" stop-color="#89ffd2"/><stop offset="0.05" stop-color="#90ffd2"/><stop offset="0.1" stop-color="#97ffd1"/><stop offset="0.15" stop-color="#9fffd1"/><stop offset="0.2" stop-color="#a6ffd1"/><stop offset="0.25" stop-color="#adffd0"/><stop offset="0.3" stop-color="#b5ffd0"/><stop offset="0.35" stop-color="#bcffd0"/><stop offset="0.4" stop-color="#c4ffd0"/><stop offset="0.45" stop-color="#cbffcf"/><stop offset="0.5" stop-color="#d3ffcf"/><stop offset="0.55" stop-color="#dbffcf"/><stop offset="0.6" stop-color="#e3ffce"/><stop offset="0.65" stop-color="#ecffce"/><stop offset="0.7" stop-color="#f4ffce"/><stop offset="0.75" stop-color="#fcffcd"/><stop offset="0.8" stop-color="#fff9c8"/><stop offset="0.85" stop-color="#fff1c2"/><stop offset="0.9" stop-color="#ffeabb"/><stop offset="0.95" stop-color="#ffe2b5"/><stop offset="1" stop-color="#ffdcaf"/></linearGradient>
<linearGradient id="c3"><stop offset="0" stop-color="#8bffd4"/><stop offset="0.05" stop-color="#92ffd3"/><stop offset="0.1" stop-color="#99ffd3"/><stop offset="0.15" stop-color="#a0ffd3"/><stop offset="0.2" stop-color="#a7ffd3"/><stop offset="0.25" stop-color="#afffd2"/><stop offset="0.3" stop-color="#b6ffd2"/><stop offset="0.35" stop-color="#beffd2"/><stop offset="0.4" stop-color="#c5ffd1"/><stop offset="0.45" stop-color="#cdffd1"/><stop offset="0.5" stop-color="#d5ffd1"/><stop offset="0.55" stop-color="#ddffd1"/><stop offset="0.6" stop-color="#e5ffd0"/><stop offset="0.65" stop-color="#edffd0"/><stop offset="0.7" stop-color="#f6ffd0"/><stop offset="0.75" stop-color="#feffcf"/><stop offset="0.8" stop-color="#fff7c9"/><stop offset="0.85" stop-color="#ffefc2"/><stop offset="0.9" stop-color="#ffe8bc"/><stop offset="0.95" stop-color="#ffe1b5"/><stop offset="1" stop-color="#ffdab0"/></linearGradient>
<linearGradient id="c4"><stop offset="0" stop-color="#8cffd5"/><stop offset="0.05" stop-color="#93ffd5"/><stop offset="0.1" stop-color="#9affd5"/><stop offset="0.15" stop-color="#a1ffd5"/><stop offset="0.2" stop-color="#a9ffd4"/><stop offset="0.25" stop-color="#b0ffd4"/><stop offset="0.3" stop-color="#b8ffd4"/><stop offset="0.35" stop-color="#bfffd4"/><stop offset="0.4" stop-color="#c7ffd3"/><stop offset="0.45" stop-color="#cfffd3"/><stop offset="0.5" stop-color="#d7ffd3"/><stop offset="0.55" stop-color="#dfffd2"/><stop offset="0.6" stop-color="#e7ffd2"/><stop offset="0.65" stop-color="#efffd2"/><stop offset="0.7" stop-color="#f8ffd2"/><stop offset="0.75" stop-color="#fffed0"/><stop offset="0.8" stop-color="#fff5c9"/><stop offset="0.85" stop-color="#ffeec2"/><stop offset="0.9" stop-color="#ffe6bc"/><stop offset="0.95" stop-color="#ffdfb6"/><stop offset="1" stop-color="#ffd8b0"/></linearGradient>
<linearGradient id="c5"><stop offset="0" stop-color="#8dffd7"/><stop offset="0.05" stop-color="#94ffd7"/><stop offset="0.1" stop-color="#9cffd7"/><stop offset="0.15" stop-color="#a3ffd7"/><stop offset="0.2" stop-color="#aaffd6"/><stop offset="0.25" stop-color="#b2ffd6"/><stop offset="0.3" stop-color="#b9ffd6"/><stop offset="0.35" stop-color="#c1ffd5"/><stop offset="0.4" stop-color="#c9ffd5"/><stop offset="0.45" stop-color="#d1ffd5"/><stop offset="0.5" stop-color="#d9ffd5"/><stop offset="0.55" stop-color="#e1ffd4"/><stop offset="0.6" stop-color="#e9ffd4"/><stop offset="0.65" stop-color="#f1ffd4"/><stop offset="0.7" stop-color="#faffd4"/><stop offset="0.75" stop-color="#fffcd0"/><stop offset="0.8" stop-color="#fff3c9"/><stop offset="0.85" stop-color="#ffecc3"/><stop offset="0.9" stop-color="#ffe4bc"/><stop offset="0.95" stop-color="#ffddb6"/><stop offset="1" stop-color="#ffd6b0"/></linearGradient>
<linearGradient id="c6"><stop offset="0" stop-color="#8fffd9"/><stop offset="0.05" stop-color="#96ffd9"/><stop offset="0.1" stop-color="#9dffd9"/><stop offset="0.15" stop-color="#a4ffd8"/><stop offset="0.2" stop-color="#acffd8"/><stop offset="0.25" stop-color="#b3ffd8"/><stop offset="0.3" stop-color="#bbffd8"/><stop offset="0.35" stop-color="#c3ffd7"/><stop offset="0.4" stop-color="#caffd7"/><stop offset="0.45" stop-color="#d2ffd7"/><stop offset="0.5" stop-color="#daffd7"/><stop offset="0.55" stop-color="#e3ffd6"/><stop offset="0.6" stop-color="#ebffd6"/><stop offset="0.65" stop-color="#f3ffd6"/><stop offset="0.7" stop-color="#fcffd6"/><stop offset="0.75" stop-color="#fffad1"/><stop offset="0.8" stop-color="#fff2ca"/><stop offset="0.85" stop-color="#ffeac3"/><stop offset="0.9" stop-color="#ffe2bd"/><stop offset="0.95" stop-color="#ffdbb6"/><stop offset="1" stop-color="#ffd5b1"/></linearGradient>
<linearGradient id="c7"><stop offset="0" stop-color="#90ffdb"/><stop offset="0.05" stop-color="#97ffdb"/><stop offset="0.1" stop-color="#9effda"/><stop offset="0.15" stop-color="#a6ffda"/><stop offset="0.2" stop-color="#adffda"/><stop offset="0.25" stop-color="#b5ffda"/><stop offset="0.3" stop-color="#bcffda"/><stop offset="0.35" stop-color="#c4ffd9"/><stop offset="0.4" stop-color="#ccffd9"/><stop offset="0.45" stop-color="#d4ffd9"/><stop offset="0.5" stop-color="#dcffd9"/><stop offset="0.55" stop-color="#e4ffd8"/><stop offset="0.6" stop-color="#edffd8"/><stop offset="0.65" stop-color="#f5ffd8"/><stop offset="0.7" stop-color="#feffd8"/><stop offset="0.75" stop-color="#fff8d1"/><stop offset="0.8" stop-color="#fff0ca"/><stop offset="0.85" stop-color="#ffe8c3"/><stop offset="0.9" stop-color="#ffe1bd"/><stop offset="0.95" stop-color="#ffdab7"/><stop offset="1" stop-color="#ffd3b1"/></linearGradient>
<linearGradient id="c8"><stop offset="0" stop-color="#91ffdd"/><stop offset="0.05" stop-color="#99ffdd"/><stop offset="0.1" stop-color="#a0ffdc"/><stop offset="0.15" stop-color="#a7ffdc"/><stop offset="0.2" stop-color="#afffdc"/><stop offset="0.25" stop-color="#b6ffdc"/><stop offset="0.3" stop-color="#beffdb"/><stop offset="0.35" stop-color="#c6ffdb"/><stop offset="0.4" stop-color="#ceffdb"/><stop offset="0.45" stop-color="#d6ffdb"/><stop offset="0.5" stop-color="#deffdb"/><stop offset="0.55" stop-color="#e6ffda"/><stop offset="0.6" stop-color="#efffda"/><stop offset="0.65" stop-color="#f7ffda"/><stop offset="0.7" stop-color="#fffed9"/><stop offset="0.75" stop-color="#fff6d1"/><stop offset="0.8" stop-color="#ffeeca"/><stop offset="0.85" stop-color="#ffe6c4"/><stop offset="0.9" stop-color="#ffdfbd"/><stop offset="0.95" stop-color="#ffd8b7"/><stop offset="1" stop-color="#ffd1b1"/></linearGradient>
<linearGradient id="c9"><stop offset="0" stop-color="#93ffdf"/><stop offset="0.05" stop-color="#9affde"/><stop offset="0.1" stop-color="#a1ffde"/><stop offset="0.15" stop-color="#a9ffde"/><stop offset="0.2" stop-color="#b0ffde"/><stop offset="0.25" stop-color="#b8ffde"/><stop offset="0.3" stop-color="#c0ffdd"/><stop offset="0.35" stop-color="#c8ffdd"/><stop offset="0.4" stop-color="#d0ffdd"/><stop offset="0.45" stop-color="#d8ffdd"/><stop offset="0.5" stop-color="#e0ffdd"/><stop offset="0.55" stop-color="#e8ffdc"/><stop offset="0.6" stop-color="#f1ffdc"/><stop offset="0.65" stop-color="#f9ffdc"/><stop offset="0.7" stop-color="#fffcd9"/><stop offset="0.75" stop-color="#fff4d2"/><stop offset="0.8" stop-color="#ffeccb"/><stop offset="0.85" stop-color="#ffe4c4"/><stop offset="0.9" stop-color="#ffddbe"/><stop offset="0.95" stop-color="#ffd6b7"/><stop offset="1" stop-color="#ffd0b2"/></linearGradient>
<linearGradient id="c10"><stop offset="0" stop-color="#94ffe1"/><stop offset="0.05" stop-color="#9bffe0"/><stop offset="0.1" stop-color="#a3ffe0"/><stop offset="0.15" stop-color="#aaffe0"/><stop offset="0.2" stop-color="#b2ffe0"/><stop offset="0.25" stop-color="#baffe0"/><stop offset="0.3" stop-color="#c1ffdf"/><stop offset="0.35" stop-color="#c9ffdf"/><stop offset="0.4" stop-color="#d1ffdf"/><stop offset="0.45" stop-color="#daffdf"/><stop offset="0.5" stop-color="#e2ffdf"/><stop offset="0.55" stop-color="#eaffde"/><stop offset="0.6" stop-color="#f3ffde"/><stop offset="0.65" stop-color="#fbffde"/><stop offset="0.7" stop-color="#fffad9"/><stop offset="0.75" stop-color="#fff2d2"/><stop offset="0.8" stop-color="#ffeacb"/><stop offset="0.85" stop-color="#ffe2c4"/><stop offset="0.9" stop-color="#ffdbbe"/><stop offset="0.95" stop-color="#ffd5b8"/><stop offset="1" stop-color="#ffceb2"/></linearGradient>
<linearGradient id="c11"><stop offset="0" stop-color="#95ffe2"/><stop offset="0.05" stop-color="#9dffe2"/><stop offset="0.1" stop-color="#a4ffe2"/><stop offset="0.15" stop-color="#acffe2"/><stop offset="0.2" stop-color="#b3ffe2"/><stop offset="0.25" stop-color="#bbffe2"/><stop offset="0.3" stop-color="#c3ffe1"/><stop offset="0.35" stop-color="#cbffe1"/><stop offset="0.4" stop-color="#d3ffe1"/><stop offset="0.45" stop-color="#dbffe1"/><stop offset="0.5" stop-color="#e4ffe1"/><stop offset="0.55" stop-color="#ecffe0"/><stop offset="0.6" stop-color="#f5ffe0"/><stop offset="0.65" stop-color="#fdffe0"/><stop offset="0.7" stop-color="#fff8da"/><stop offset="0.75" stop-color="#fff0d2"/><stop offset="0.8" stop-color="#ffe8cb"/><stop offset="0.85" stop-color="#ffe1c5"/><stop offset="0.9" stop-color="#ffdabe"/><stop offset="0.95" stop-color="#ffd3b8"/><stop offset="1" stop-color="#ffccb2"/></linearGradient>
<linearGradient id="c12"><stop offset="0" stop-color="#97ffe4"/><stop offset="0.05" stop-color="#9effe4"/><stop offset="0.1" stop-color="#a6ffe4"/><stop offset="0.15" stop-color="#adffe4"/><stop offset="0.2" stop-color="#b5ffe4"/><stop offset="0.25" stop-color="#bdffe4"/><stop offset="0.3" stop-color="#c5ffe3"/><stop offset="0.35" stop-color="#cdffe3"/><stop offset="0.4" stop-color="#d5ffe3"/><stop offset="0.45" stop-color="#ddffe3"/><stop offset="0.5" stop-color="#e6ffe3"/><stop offset="0.55" stop-color="#eeffe2"/><stop offset="0.6" stop-color="#f7ffe2"/><stop offset="0.65" stop-color="#fffee2"/><stop offset="0.7" stop-color="#fff6da"/><stop offset="0.75" stop-color="#ffeed2"/><stop offset="0.8" stop-color="#ffe6cb"/><stop offset="0.85" stop-color="#ffdfc5"/><stop offset="0.9" stop-color="#ffd8be"/><stop offset="0.95" stop-color="#ffd1b8"/><stop offset="1" stop-color="#ffcbb3"/></linearGradient>
<linearGradient id="c13"><stop offset="0" stop-color="#98ffe6"/><stop offset="0.05" stop-color="#a0ffe6"/><stop offset="0.1" stop-color="#a7ffe6"/><stop offset="0.15" stop-color="#afffe6"/><stop offset="0.2" stop-color="#b7ffe6"/><stop offset="0.25" stop-color="#bfffe6"/><stop offset="0.3" stop-color="#c7ffe5"/><stop offset="0.35" stop-color="#cfffe5"/><stop offset="0.4" stop-color="#d7ffe5"/><stop offset="0.45" stop-color="#dfffe5"/><stop offset="0.5" stop-color="#e8ffe5"/><stop offset="0.55" stop-color="#f0ffe5"/><stop offset="0.6" stop-color="#f9ffe4"/><stop offset="0.65" stop-color="#fffce2"/><stop offset="0.7" stop-color="#fff4da"/><stop offset="0.75" stop-color="#ffecd3"/><stop offset="0.8" stop-color="#ffe4cc"/><stop offset="0.85" stop-color="#ffddc5"/><stop offset="0.9" stop-color="#ffd6bf"/><stop offset="0.95" stop-color="#ffd0b9"/><stop offset="1" stop-color="#ffc9b3"/></linearGradient>
<linearGradient id="c14"><stop offset="0" stop-color="#9affe8"/><stop offset="0.05" stop-color="#a1ffe8"/><stop offset="0.1" stop-color="#a9ffe8"/><stop offset="0.15" stop-color="#b1ffe8"/><stop offset="0.2" stop-color="#b8ffe8"/><stop offset="0.25" stop-color="#c0ffe8"/><stop offset="0.3" stop-color="#c8ffe7"/><stop offset="0.35" stop-color="#d0ffe7"/><stop offset="0.4" stop-color="#d9ffe7"/><stop offset="0.45" stop-color="#e1ffe7"/><stop offset="0.5" stop-color="#eaffe7"/><stop offset="0.55" stop-color="#f2ffe7"/><stop offset="0.6" stop-color="#fbffe6"/><stop offset="0.65" stop-color="#fffae2"/><stop offset="0.7" stop-color="#fff2da"/><stop offset="0.75" stop-color="#ffead3"/><stop offset="0.8" stop-color="#ffe2cc"/><stop offset="0.85" stop-color="#ffdbc5"/><stop offset="0.9" stop-color="#ffd4bf"/><stop offset="0.95" stop-color="#ffceb9"/><stop offset="1" stop-color="#ffc8b3"/></linearGradient>
<linearGradient id="c15"><stop offset="0" stop-color="#9bffea"/><stop offset="0.05" stop-color="#a3ffea"/><stop offset="0.1" stop-color="#aaffea"/><stop offset="0.15" stop-color="#b2ffea"/><stop offset="0.2" stop-color="#baffea"/><stop offset="0.25" stop-color="#c2ffea"/><stop offset="0.3" stop-color="#caffe9"/><stop offset="0.35" stop-color="#d2ffe9"/><stop offset="0.4" stop-color="#dbffe9"/><stop offset="0.45" stop-color="#e3ffe9"/><stop offset="0.5" stop-color="#ebffe9"/><stop offset="0.55" stop-color="#f4ffe9"/><stop offset="0.6" stop-color="#fdffe9"/><stop offset="0.65" stop-color="#fff8e2"/><stop offset="0.7" stop-color="#fff0db"/><stop offset="0.75" stop-color="#ffe8d3"/><stop offset="0.8" stop-color="#ffe1cc"/><stop offset="0.85" stop-color="#ffd9c6"/><stop offset="0.9" stop-color="#ffd3bf"/><stop offset="0.95" stop-color="#ffccb9"/><stop offset="1" stop-color="#ffc6b4"/></linearGradient>
<linearGradient id="c16"><stop offset="0" stop-color="#9dffec"/><stop offset="0.05" stop-color="#a4ffec"/><stop offset="0.1" stop-color="#acffec"/><stop offset="0.15" stop-color="#b4ffec"/><stop offset="0.2" stop-color="#bcffec"/><stop offset="0.25" stop-color="#c4ffec"/><stop offset="0.3" stop-color="#ccffec"/><stop offset="0.35" stop-color="#d4ffeb"/><stop offset="0.4" stop-color="#dcffeb"/><stop offset="0.45" stop-color="#e5ffeb"/><stop offset="0.5" stop-color="#edffeb"/><stop offset="0.55" stop-color="#f6ffeb"/><stop offset="0.6" stop-color="#ffffeb"/><stop offset="0.65" stop-color="#fff6e3"/><stop offset="0.7" stop-color="#ffeedb"/><stop offset="0.75" stop-color="#ffe6d4"/><stop offset="0.8" stop-color="#ffdfcd"/><stop offset="0.85" stop-color="#ffd8c6"/><stop offset="0.9" stop-color="#ffd1c0"/><stop offset="0.95" stop-color="#ffcbba"/><stop offset="1" stop-color="#ffc4b4"/></linearGradient>
<linearGradient id="c17"><stop offset="0" stop-color="#9effee"/><stop offset="0.05" stop-color="#a6ffee"/><stop offset="0.1" stop-color="#aeffee"/><stop offset="0.15" stop-color="#b5ffee"/><stop offset="0.2" stop-color="#bdffee"/><stop offset="0.25" stop-color="#c5ffee"/><stop offset="0.3" stop-color="#ceffee"/><stop offset="0.35" stop-color="#d6ffee"/><stop offset="0.4" stop-color="#deffed"/><stop offset="0.45" stop-color="#e7ffed"/><stop offset="0.5" stop-color="#efffed"/><stop offset="0.55" stop-color="#f8ffed"/><stop offset="0.6" stop-color="#fffdeb"/><stop offset="0.65" stop-color="#fff4e3"/><stop offset="0.7" stop-color="#ffecdb"/><stop offset="0.75" stop-color="#ffe4d4"/><stop offset="0.8" stop-color="#ffddcd"/><stop offset="0.85" stop-color="#ffd6c6"/><stop offset="0.9" stop-color="#ffcfc0"/><stop offset="0.95" stop-color="#ffc9ba"/><stop offset="1" stop-color="#ffc3b4"/></linearGradient>
<linearGradient id="c18"><stop offset="0" stop-color="#a0fff0"/><stop offset="0.05" stop-color="#a7fff0"/><stop offset="0.1" stop-color="#affff0"/><stop offset="0.15" stop-color="#b7fff0"/><stop offset="0.2" stop-color="#bffff0"/><stop offset="0.25" stop-color="#c7fff0"/><stop offset="0.3" stop-color="#cffff0"/><stop offset="0.35" stop-color="#d8fff0"/><stop offset="0.4" stop-color="#e0fff0"/><stop offset="0.45" stop-color="#e9fff0"/><stop offset="0.5" stop-color="#f2ffef"/><stop offset="0.55" stop-color="#faffef"/><stop offset="0.6" stop-color="#fffbeb"/><stop offset="0.65" stop-color="#fff2e3"/><stop offset="0.7" stop-color="#ffeadb"/><stop offset="0.75" stop-color="#ffe2d4"/><stop offset="0.8" stop-color="#ffdbcd"/><stop offset="0.85" stop-color="#ffd4c7"/><stop offset="0.9" stop-color="#ffcec0"/><stop offset="0.95" stop-color="#ffc7ba"/><stop offset="1" stop-color="#ffc1b5"/></linearGradient>
<linearGradient id="c19"><stop offset="0" stop-color="#a1fff2"/><stop offset="0.05" stop-color="#a9fff2"/><stop offset="0.1" stop-color="#b1fff2"/><stop offset="0.15" stop-color="#b9fff2"/><stop offset="0.2" stop-color="#c1fff2"/><stop offset="0.25" stop-color="#c9fff2"/><stop offset="0.3" stop-color="#d1fff2"/><stop offset="0.35" stop-color="#dafff2"/><stop offset="0.4" stop-color="#e2fff2"/><stop offset="0.45" stop-color="#ebfff2"/><stop offset="0.5" stop-color="#f4fff2"/><stop offset="0.55" stop-color="#fdfff2"/><stop offset="0.6" stop-color="#fff9eb"/><stop offset="0.65" stop-color="#fff0e3"/><stop offset="0.7" stop-color="#ffe8dc"/><stop offset="0.75" stop-color="#ffe1d4"/><stop offset="0.8" stop-color="#ffd9cd"/><stop offset="0.85" stop-color="#ffd2c7"/><stop offset="0.9" stop-color="#ffccc1"/><stop offset="0.95" stop-color="#ffc6bb"/><stop offset="1" stop-color="#ffc0b5"/></linearGradient>
<linearGradient id="c20"><stop offset="0" stop-color="#a3fff5"/><stop offset="0.05" stop-color="#aafff4"/><stop offset="0.1" stop-color="#b2fff4"/><stop offset="0.15" stop-color="#bafff4"/><stop offset="0.2" stop-color="#c2fff4"/><stop offset="0.25" stop-color="#cbfff4"/><stop offset="0.3" stop-color="#d3fff4"/><stop offset="0.35" stop-color="#dbfff4"/><stop offset="0.4" stop-color="#e4fff4"/><stop offset="0.45" stop-color="#edfff4"/><stop offset="0.5" stop-color="#f6fff4"/><stop offset="0.55" stop-color="#fffff4"/><stop offset="0.6" stop-color="#fff6ec"/><stop offset="0.65" stop-color="#ffeee4"/><stop offset="0.7" stop-color="#ffe6dc"/><stop offset="0.75" stop-color="#ffdfd5"/><stop offset="0.8" stop-color="#ffd8ce"/><stop offset="0.85" stop-color="#ffd1c7"/><stop offset="0.9" stop-color="#ffcac1"/><stop offset="0.95" stop-color="#ffc4bb"/><stop offset="1" stop-color="#ffbeb5"/></linearGradient>
<linearGradient id="c21"><stop offset="0" stop-color="#a4fff7"/><stop offset="0.05" stop-color="#acfff7"/><stop offset="0.1" stop-color="#b4fff7"/><stop offset="0.15" stop-color="#bcfff6"/><stop offset="0.2" stop-color="#c4fff6"/><stop offset="0.25" stop-color="#ccfff6"/><stop offset="0.3" stop-color="#d5fff6"/><stop offset="0.35" stop-color="#ddfff6"/><stop offset="0.4" stop-color="#e6fff6"/><stop offset="0.45" stop-color="#effff6"/><stop offset="0.5" stop-color="#f8fff6"/><stop offset="0.55" stop-color="#fffdf4"/><stop offset="0.6" stop-color="#fff4ec"/><stop offset="0.65" stop-color="#ffece4"/><stop offset="0.7" stop-color="#ffe4dc"/><stop offset="0.75" stop-color="#ffddd5"/><stop offset="0.8" stop-color="#ffd6ce"/><stop offset="0.85" stop-color="#ffcfc7"/><stop offset="0.9" stop-color="#ffc9c1"/><stop offset="0.95" stop-color="#ffc2bb"/><stop offset="1" stop-color="#ffbcb6"/></linearGradient>
<linearGradient id="c22"><stop offset="0" stop-color="#a6fff9"/><stop offset="0.05" stop-color="#aefff9"/><stop offset="0.1" stop-color="#b6fff9"/><stop offset="0.15" stop-color="#befff9"/><stop offset="0.2" stop-color="#c6fff9"/><stop offset="0.25" stop-color="#cefff9"/><stop offset="0.3" stop-color="#d7fff9"/><stop offset="0.35" stop-color="#dffff9"/><stop offset="0.4" stop-color="#e8fff8"/><stop offset="0.45" stop-color="#f1fff8"/><stop offset="0.5" stop-color="#fafff8"/><stop offset="0.55" stop-color="#fffbf5"/><stop offset="0.6" stop-color="#fff2ec"/><stop offset="0.65" stop-color="#ffeae4"/><stop offset="0.7" stop-color="#ffe2dc"/><stop offset="0.75" stop-color="#ffdbd5"/><stop offset="0.8" stop-color="#ffd4ce"/><stop offset="0.85" stop-color="#ffcdc8"/><stop offset="0.9" stop-color="#ffc7c2"/><stop offset="0.95" stop-color="#ffc1bc"/><stop offset="1" stop-color="#ffbbb6"/></linearGradient>
<linearGradient id="c23"><stop offset="0" stop-color="#a7fffb"/><stop offset="0.05" stop-color="#affffb"/><stop offset="0.1" stop-color="#b7fffb"/><stop offset="0.15" stop-color="#bffffb"/><stop offset="0.2" stop-color="#c8fffb"/><stop offset="0.25" stop-color="#d0fffb"/><stop offset="0.3" stop-color="#d9fffb"/><stop offset="0.35" stop-color="#e1fffb"/><stop offset="0.4" stop-color="#eafffb"/><stop offset="0.45" stop-color="#f3fffb"/><stop offset="0.5" stop-color="#fcfffb"/><stop offset="0.55" stop-color="#fff9f5"/><stop offset="0.6" stop-color="#fff0ec"/><stop offset="0.65" stop-color="#ffe8e4"/><stop offset="0.7" stop-color="#ffe0dd"/><stop offset="0.75" stop-color="#ffd9d5"/><stop offset="0.8" stop-color="#ffd2cf"/><stop offset="0.85" stop-color="#ffccc8"/><stop offset="0.9" stop-color="#ffc5c2"/><stop offset="0.95" stop-color="#ffbfbc"/><stop offset="1" stop-color="#ffb9b6"/></linearGradient>
<linearGradient id="c24"><stop offset="0" stop-color="#a9fffd"/><stop offset="0.05" stop-color="#b1fffd"/><stop offset="0.1" stop-color="#b9fffd"/><stop offset="0.15" stop-color="#c1fffd"/><stop offset="0.2" stop-color="#cafffd"/><stop offset="0.25" stop-color="#d2fffd"/><stop offset="0.3" stop-color="#dbfffd"/><stop offset="0.35" stop-color="#e3fffd"/><stop offset="0.4" stop-color="#ecfffd"/><stop offset="0.45" stop-color="#f5fffd"/><stop offset="0.5" stop-color="#fefffd"/><stop offset="0.55" stop-color="#fff7f5"/><stop offset="0.6" stop-color="#ffeeec"/><stop offset="0.65" stop-color="#ffe6e5"/><stop offset="0.7" stop-color="#ffdfdd"/><stop offset="0.75" stop-color="#ffd7d6"/><stop offset="0.8" stop-color="#ffd0cf"/><stop offset="0.85" stop-color="#ffcac8"/><stop offset="0.9" stop-color="#ffc4c2"/><stop offset="0.95" stop-color="#ffbebc"/><stop offset="1" stop-color="#ffb8b6"/></linearGradient>
<linearGradient id="c25"><stop offset="0" stop-color="#aaffff"/><stop offset="0.05" stop-color="#b2ffff"/><stop offset="0.1" stop-color="#bbffff"/><stop offset="0.15" stop-color="#c3ffff"/><stop offset="0.2" stop-color="#cbffff"/><stop offset="0.25" stop-color="#d4ffff"/><stop offset="0.3" stop-color="#dcffff"/><stop offset="0.35" stop-color="#e5ffff"/><stop offset="0.4" stop-color="#eeffff"/><stop offset="0.45" stop-color="#f7ffff"/><stop offset="0.5" stop-color="#fffefe"/><stop offset="0.55" stop-color="#fff5f5"/><stop offset="0.6" stop-color="#ffeced"/><stop offset="0.65" stop-color="#ffe4e5"/><stop offset="0.7" stop-color="#ffdddd"/><stop offset="0.75" stop-color="#ffd6d6"/><stop offset="0.8" stop-color="#ffcfcf"/><stop offset="0.85" stop-color="#ffc8c9"/><stop offset="0.9" stop-color="#ffc2c2"/><stop offset="0.95" stop-color="#ffbcbc"/><stop offset="1" stop-color="#ffb6b7"/></linearGradient>
<linearGradient id="c26"><stop offset="0" stop-color="#abfdff"/><stop offset="0.05" stop-color="#b2fdff"/><stop offset="0.1" stop-color="#bbfcff"/><stop offset="0.15" stop-color="#c3fcff"/><stop offset="0.2" stop-color="#cbfcff"/><stop offset="0.25" stop-color="#d4fcff"/><stop offset="0.3" stop-color="#dcfcff"/><stop offset="0.35" stop-color="#e5fcff"/><stop offset="0.4" stop-color="#eefcff"/><stop offset="0.45" stop-color="#f7fcff"/><stop offset="0.5" stop-color="#fffbfe"/><stop offset="0.55" stop-color="#fff3f5"/><stop offset="0.6" stop-color="#ffeaed"/><stop offset="0.65" stop-color="#ffe2e5"/><stop offset="0.7" stop-color="#ffdbdd"/><stop offset="0.75" stop-color="#ffd4d6"/><stop offset="0.8" stop-color="#ffcdcf"/><stop offset="0.85" stop-color="#ffc6c9"/><stop offset="0.9" stop-color="#ffc0c3"/><stop offset="0.95" stop-color="#ffbabd"/><stop offset="1" stop-color="#ffb5b7"/></linearGradient>
<linearGradient id="c27"><stop offset="0" stop-color="#abfaff"/><stop offset="0.05" stop-color="#b3faff"/><stop offset="0.1" stop-color="#bbfaff"/><stop offset="0.15" stop-color="#c3faff"/><stop offset="0.2" stop-color="#cbfaff"/><stop offset="0.25" stop-color="#d4faff"/><stop offset="0.3" stop-color="#dcfaff"/><stop offset="0.35" stop-color="#e5faff"/><stop offset="0.4" stop-color="#eefaff"/><stop offset="0.45" stop-color="#f7faff"/><stop offset="0.5" stop-color="#fff9fe"/><stop offset="0.55" stop-color="#fff1f6"/><stop offset="0.6" stop-color="#ffe8ed"/><stop offset="0.65" stop-color="#ffe0e5"/><stop offset="0.7" stop-color="#ffd9de"/><stop offset="0.75" stop-color="#ffd2d6"/><stop offset="0.8" stop-color="#ffcbd0"/><stop offset="0.85" stop-color="#ffc5c9"/><stop offset="0.9" stop-color="#ffbfc3"/><stop offset="0.95" stop-color="#ffb9bd"/><stop offset="1" stop-color="#ffb3b7"/></linearGradient>
<linearGradient id="c28"><stop offset="0" stop-color="#abf8ff"/><stop offset="0.05" stop-color="#b3f8ff"/><stop offset="0.1" stop-color="#bbf8ff"/><stop offset="0.15" stop-color="#c3f8ff"/><stop offset="0.2" stop-color="#cbf8ff"/><stop offset="0.25" stop-color="#d4f8ff"/><stop offset="0.3" stop-color="#dcf8ff"/><stop offset="0.35" stop-color="#e5f8ff"/><stop offset="0.4" stop-color="#eef8ff"/><stop offset="0.45" stop-color="#f6f8ff"/><stop offset="0.5" stop-color="#fff7ff"/><stop offset="0.55" stop-color="#ffeef6"/><stop offset="0.6" stop-color="#ffe6ed"/><stop offset="0.65" stop-color="#ffdfe5"/><stop offset="0.7" stop-color="#ffd7de"/><stop offset="0.75" stop-color="#ffd0d7"/><stop offset="0.8" stop-color="#ffc9d0"/><stop offset="0.85" stop-color="#ffc3c9"/><stop offset="0.9" stop-color="#ffbdc3"/><stop offset="0.95" stop-color="#ffb7bd"/><stop offset="1" stop-color="#ffb2b8"/></linearGradient>
<linearGradient id="c29"><stop offset="0" stop-color="#abf6ff"/><stop offset="0.05" stop-color="#b3f6ff"/><stop offset="0.1" stop-color="#bbf6ff"/><stop offset="0.15" stop-color="#c3f6ff"/><stop offset="0.2" stop-color="#cbf6ff"/><stop offset="0.25" stop-color="#d4f6ff"/><stop offset="0.3" stop-color="#dcf6ff"/><stop offset="0.35" stop-color="#e5f6ff"/><stop offset="0.4" stop-color="#edf5ff"/><stop offset="0.45" stop-color="#f6f5ff"/><stop offset="0.5" stop-color="#fff5ff"/><stop offset="0.55" stop-color="#ffecf6"/><stop offset="0.6" stop-color="#ffe4ee"/><stop offset="0.65" stop-color="#ffdde6"/><stop offset="0.7" stop-color="#ffd5de"/><stop offset="0.75" stop-color="#ffced7"/><stop offset="0.8" stop-color="#ffc8d0"/><stop offset="0.85" stop-color="#ffc1ca"/><stop offset="0.9" stop-color="#ffbbc4"/><stop offset="0.95" stop-color="#ffb6be"/><stop offset="1" stop-color="#ffb0b8"/></linearGradient>
<linearGradient id="c30"><stop offset="0" stop-color="#abf4ff"/><stop offset="0.05" stop-color="#b3f4ff"/><stop offset="0.1" stop-color="#bbf4ff"/><stop offset="0.15" stop-color="#c3f4ff"/><stop offset="0.2" stop-color="#cbf4ff"/><stop offset="0.25" stop-color="#d4f3ff"/><stop offset="0.3" stop-color="#dcf3ff"/><stop offset="0.35" stop-color="#e5f3ff"/><stop offset="0.4" stop-color="#edf3ff"/><stop offset="0.45" stop-color="#f6f3ff"/><stop offset="0.5" stop-color="#fff3ff"/><stop offset="0.55" stop-color="#ffeaf6"/><stop offset="0.6" stop-color="#ffe2ee"/><stop offset="0.65" stop-color="#ffdbe6"/><stop offset="0.7" stop-color="#ffd3de"/><stop offset="0.75" stop-color="#ffcdd7"/><stop offset="0.8" stop-color="#ffc6d0"/><stop offset="0.85" stop-color="#ffc0ca"/><stop offset="0.9" stop-color="#ffbac4"/><stop offset="0.95" stop-color="#ffb4be"/><stop offset="1" stop-color="#ffafb8"/></linearGradient>
<linearGradient id="c31"><stop offset="0" stop-color="#abf2ff"/><stop offset="0.05" stop-color="#b3f2ff"/><stop offset="0.1" stop-color="#bbf2ff"/><stop offset="0.15" stop-color="#c3f2ff"/><stop offset="0.2" stop-color="#cbf1ff"/><stop offset="0.25" stop-color="#d4f1ff"/><stop offset="0.3" stop-color="#dcf1ff"/><stop offset="0.35" stop-color="#e5f1ff"/><stop offset="0.4" stop-color="#edf1ff"/><stop offset="0.45" stop-color="#f6f1ff"/><stop offset="0.5" stop-color="#fff1ff"/><stop offset="0.55" stop-color="#ffe8f6"/><stop offset="0.6" stop-color="#ffe0ee"/><stop offset="0.65" stop-color="#ffd9e6"/><stop offset="0.7" stop-color="#ffd2df"/><stop offset="0.75" stop-color="#ffcbd8"/><stop offset="0.8" stop-color="#ffc4d1"/><stop offset="0.85" stop-color="#ffbeca"/><stop offset="0.9" stop-color="#ffb8c4"/><stop offset="0.95" stop-color="#ffb3be"/><stop offset="1" stop-color="#ffadb9"/></linearGradient>
<linearGradient id="c32"><stop offset="0" stop-color="#abf0ff"/><stop offset="0.05" stop-color="#b3f0ff"/><stop offset="0.1" stop-color="#bbefff"/><stop offset="0.15" stop-color="#c3efff"/><stop offset="0.2" stop-color="#cbefff"/><stop offset="0.25" stop-color="#d4efff"/><stop offset="0.3" stop-color="#dcefff"/><stop offset="0.35" stop-color="#e4efff"/><stop offset="0.4" stop-color="#edefff"/><stop offset="0.45" stop-color="#f6efff"/><stop offset="0.5" stop-color="#ffeeff"/><stop offset="0.55" stop-color="#ffe6f6"/><stop offset="0.6" stop-color="#ffdeee"/><stop offset="0.65" stop-color="#ffd7e6"/><stop offset="0.7" stop-color="#ffd0df"/><stop offset="0.75" stop-color="#ffc9d8"/><stop offset="0.8" stop-color="#ffc3d1"/><stop offset="0.85" stop-color="#ffbdcb"/><stop offset="0.9" stop-color="#ffb7c4"/><stop offset="0.95" stop-color="#ffb1bf"/><stop offset="1" stop-color="#ffacb9"/></linearGradient>
<linearGradient id="c33"><stop offset="0" stop-color="#abeeff"/><stop offset="0.05" stop-color="#b3eeff"/><stop offset="0.1" stop-color="#bbedff"/><stop offset="0.15" stop-color="#c3edff"/><stop offset="0.2" stop-color="#cbedff"/><stop offset="0.25" stop-color="#d4edff"/><stop offset="0.3" stop-color="#dcedff"/><stop offset="0.35" stop-color="#e4edff"/><stop offset="0.4" stop-color="#edecff"/><stop offset="0.45" stop-color="#f6ecff"/><stop offset="0.5" stop-color="#ffecff"/><stop offset="0.55" stop-color="#ffe4f7"/><stop offset="0.6" stop-color="#ffddee"/><stop offset="0.65" stop-color="#ffd5e7"/><stop offset="0.7" stop-color="#ffcedf"/><stop offset="0.75" stop-color="#ffc7d8"/><stop offset="0.8" stop-color="#ffc1d1"/><stop offset="0.85" stop-color="#ffbbcb"/><stop offset="0.9" stop-color="#ffb5c5"/><stop offset="0.95" stop-color="#ffb0bf"/><stop offset="1" stop-color="#ffaab9"/></linearGradient>
<linearGradient id="c34"><stop offset="0" stop-color="#acecff"/><stop offset="0.05" stop-color="#b3ebff"/><stop offset="0.1" stop-color="#bbebff"/><stop offset="0.15" stop-color="#c3ebff"/><stop offset="0.2" stop-color="#cbebff"/><stop offset="0.25" stop-color="#d4ebff"/><stop offset="0.3" stop-color="#dcebff"/><stop offset="0.35" stop-color="#e4eaff"/><stop offset="0.4" stop-color="#edeaff"/><stop offset="0.45" stop-color="#f6eaff"/><stop offset="0.5" stop-color="#feeaff"/><stop offset="0.55" stop-color="#ffe2f7"/><stop offset="0.6" stop-color="#ffdbef"/><stop offset="0.65" stop-color="#ffd3e7"/><stop offset="0.7" stop-color="#ffccdf"/><stop offset="0.75" stop-color="#ffc6d8"/><stop offset="0.8" stop-color="#ffbfd2"/><stop offset="0.85" stop-color="#ffb9cb"/><stop offset="0.9" stop-color="#ffb4c5"/><stop offset="0.95" stop-color="#ffaebf"/><stop offset="1" stop-color="#ffa9b9"/></linearGradient>
<linearGradient id="c35"><stop offset="0" stop-color="#aceaff"/><stop offset="0.05" stop-color="#b3e9ff"/><stop offset="0.1" stop-color="#bbe9ff"/><stop offset="0.15" stop-color="#c3e9ff"/><stop offset="0.2" stop-color="#cbe9ff"/><stop offset="0.25" stop-color="#d4e9ff"/><stop offset="0.3" stop-color="#dce8ff"/><stop offset="0.35" stop-color="#e4e8ff"/><stop offset="0.4" stop-color="#ede8ff"/><stop offset="0.45" stop-color="#f6e8ff"/><stop offset="0.5" stop-color="#fee8ff"/><stop offset="0.55" stop-color="#ffe0f7"/><stop offset="0.6" stop-color="#ffd9ef"/><stop offset="0.65" stop-color="#ffd1e7"/><stop offset="0.7" stop-color="#ffcbe0"/><stop offset="0.75" stop-color="#ffc4d9"/><stop offset="0.8" stop-color="#ffbed2"/><stop offset="0.85" stop-color="#ffb8cb"/><stop offset="0.9" stop-color="#ffb2c5"/><stop offset="0.95" stop-color="#ffadbf"/><stop offset="1" stop-color="#ffa7ba"/></linearGradient>
<linearGradient id="c36"><stop offset="0" stop-color="#ace7ff"/><stop offset="0.05" stop-color="#b4e7ff"/><stop offset="0.1" stop-color="#bbe7ff"/><stop offset="0.15" stop-color="#c3e7ff"/><stop offset="0.2" stop-color="#cbe7ff"/><stop offset="0.25" stop-color="#d4e7ff"/><stop offset="0.3" stop-color="#dce6ff"/><stop offset="0.35" stop-color="#e4e6ff"/><stop offset="0.4" stop-color="#ede6ff"/><stop offset="0.45" stop-color="#f5e6ff"/><stop offset="0.5" stop-color="#fee6ff"/><stop offset="0.55" stop-color="#ffdef7"/><stop offset="0.6" stop-color="#ffd7ef"/><stop offset="0.65" stop-color="#ffd0e7"/><stop offset="0.7" stop-color="#ffc9e0"/><stop offset="0.75" stop-color="#ffc2d9"/><stop offset="0.8" stop-color="#ffbcd2"/><stop offset="0.85" stop-color="#ffb6cc"/><stop offset="0.9" stop-color="#ffb0c6"/><stop offset="0.95" stop-color="#ffabc0"/><stop offset="1" stop-color="#ffa6ba"/></linearGradient>
<linearGradient id="c37"><stop offset="0" stop-color="#ace5ff"/><stop offset="0.05" stop-color="#b4e5ff"/><stop offset="0.1" stop-color="#bbe5ff"/><stop offset="0.15" stop-color="#c3e5ff"/><stop offset="0.2" stop-color="#cbe5ff"/><stop offset="0.25" stop-color="#d4e4ff"/><stop offset="0.3" stop-color="#dce4ff"/><stop offset="0.35" stop-color="#e4e4ff"/><stop offset="0.4" stop-color="#ede4ff"/><stop offset="0.45" stop-color="#f5e4ff"/><stop offset="0.5" stop-color="#fee3ff"/><stop offset="0.55" stop-color="#ffdcf7"/><stop offset="0.6" stop-color="#ffd5ef"/><stop offset="0.65" stop-color="#ffcee7"/><stop offset="0.7" stop-color="#ffc7e0"/><stop offset="0.75" stop-color="#ffc1d9"/><stop offset="0.8" stop-color="#ffbad2"/><stop offset="0.85" stop-color="#ffb5cc"/><stop offset="0.9" stop-color="#ffafc6"/><stop offset="0.95" stop-color="#ffaac0"/><stop offset="1" stop-color="#ffa4ba"/></linearGradient>
<linearGradient id="c38"><stop offset="0" stop-color="#ace3ff"/><stop offset="0.05" stop-color="#b4e3ff"/><stop offset="0.1" stop-color="#bce3ff"/><stop offset="0.15" stop-color="#c3e3ff"/><stop offset="0.2" stop-color="#cbe3ff"/><stop offset="0.25" stop-color="#d4e2ff"/><stop offset="0.3" stop-color="#dce2ff"/><stop offset="0.35" stop-color="#e4e2ff"/><stop offset="0.4" stop-color="#ede2ff"/><stop offset="0.45" stop-color="#f5e1ff"/><stop offset="0.5" stop-color="#fee1ff"/><stop offset="0.55" stop-color="#ffdaf8"/><stop offset="0.6" stop-color="#ffd3ef"/><stop offset="0.65" stop-color="#ffcce8"/><stop offset="0.7" stop-color="#ffc5e0"/><stop offset="0.75" stop-color="#ffbfd9"/><stop offset="0.8" stop-color="#ffb9d3"/><stop offset="0.85" stop-color="#ffb3cc"/><stop offset="0.9" stop-color="#ffadc6"/><stop offset="0.95" stop-color="#ffa8c0"/><stop offset="1" stop-color="#ffa3bb"/></linearGradient>
<linearGradient id="c39"><stop offset="0" stop-color="#ace1ff"/><stop offset="0.05" stop-color="#b4e1ff"/><stop offset="0.1" stop-color="#bce1ff"/><stop offset="0.15" stop-color="#c3e1ff"/><stop offset="0.2" stop-color="#cbe1ff"/><stop offset="0.25" stop-color="#d4e0ff"/><stop offset="0.3" stop-color="#dce0ff"/><stop offset="0.35" stop-color="#e4e0ff"/><stop offset="0.4" stop-color="#ece0ff"/><stop offset="0.45" stop-color="#f5dfff"/><stop offset="0.5" stop-color="#fedfff"/><stop offset="0.55" stop-color="#ffd9f8"/><stop offset="0.6" stop-color="#ffd1f0"/><stop offset="0.65" stop-color="#ffcae8"/><stop offset="0.7" stop-color="#ffc4e0"/><stop offset="0.75" stop-color="#ffbdd9"/><stop offset="0.8" stop-color="#ffb7d3"/><stop offset="0.85" stop-color="#ffb1cc"/><stop offset="0.9" stop-color="#ffacc6"/><stop offset="0.95" stop-color="#ffa7c1"/><stop offset="1" stop-color="#ffa2bb"/></linearGradient>
<linearGradient id="c40"><stop offset="0" stop-color="#acdfff"/><stop offset="0.05" stop-color="#b4dfff"/><stop offset="0.1" stop-color="#bcdfff"/><stop offset="0.15" stop-color="#c4dfff"/><stop offset="0.2" stop-color="#cbdeff"/><stop offset="0.25" stop-color="#d4deff"/><stop offset="0.3" stop-color="#dcdeff"/><stop offset="0.35" stop-color="#e4deff"/><stop offset="0.4" stop-color="#ecddff"/><stop offset="0.45" stop-color="#f5ddff"/><stop offset="0.5" stop-color="#feddff"/><stop offset="0.55" stop-color="#ffd7f8"/><stop offset="0.6" stop-color="#ffcff0"/><stop offset="0.65" stop-color="#ffc8e8"/><stop offset="0.7" stop-color="#ffc2e1"/><stop offset="0.75" stop-color="#ffbcda"/><stop offset="0.8" stop-color="#ffb6d3"/><stop offset="0.85" stop-color="#ffb0cd"/><stop offset="0.9" stop-color="#ffaac7"/><stop offset="0.95" stop-color="#ffa5c1"/><stop offset="1" stop-color="#ffa0bb"/></linearGradient>
<linearGradient id="c41"><stop offset="0" stop-color="#acddff"/><stop offset="0.05" stop-color="#b4ddff"/><stop offset="0.1" stop-color="#bcddff"/><stop offset="0.15" stop-color="#c4ddff"/><stop offset="0.2" stop-color="#cbdcff"/><stop offset="0.25" stop-color="#d4dcff"/><stop offset="0.3" stop-color="#dcdcff"/><stop offset="0.35" stop-color="#e4dcff"/><stop offset="0.4" stop-color="#ecdbff"/><stop offset="0.45" stop-color="#f5dbff"/><stop offset="0.5" stop-color="#fddbff"/><stop offset="0.55" stop-color="#ffd5f8"/><stop offset="0.6" stop-color="#ffcdf0"/><stop offset="0.65" stop-color="#ffc7e8"/><stop offset="0.7" stop-color="#ffc0e1"/><stop offset="0.75" stop-color="#ffbada"/><stop offset="0.8" stop-color="#ffb4d3"/><stop offset="0.85" stop-color="#ffaecd"/><stop offset="0.9" stop-color="#ffa9c7"/><stop offset="0.95" stop-color="#ffa4c1"/><stop offset="1" stop-color="#ff9fbc"/></linearGradient>
<linearGradient id="c42"><stop offset="0" stop-color="#addbff"/><stop offset="0.05" stop-color="#b4dbff"/><stop offset="0.1" stop-color="#bcdbff"/><stop offset="0.15" stop-color="#c4dbff"/><stop offset="0.2" stop-color="#ccdaff"/><stop offset="0.25" stop-color="#d4daff"/><stop offset="0.3" stop-color="#dcdaff"/><stop offset="0.35" stop-color="#e4daff"/><stop offset="0.4" stop-color="#ecd9ff"/><stop offset="0.45" stop-color="#f5d9ff"/><stop offset="0.5" stop-color="#fdd9ff"/><stop offset="0.55" stop-color="#ffd3f8"/><stop offset="0.6" stop-color="#ffccf0"/><stop offset="0.65" stop-color="#ffc5e8"/><stop offset="0.7" stop-color="#ffbee1"/><stop offset="0.75" stop-color="#ffb8da"/><stop offset="0.8" stop-color="#ffb2d4"/><stop offset="0.85" stop-color="#ffadcd"/><stop offset="0.9" stop-color="#ffa7c7"/><stop offset="0.95" stop-color="#ffa2c1"/><stop offset="1" stop-color="#ff9dbc"/></linearGradient>
<linearGradient id="c43"><stop offset="0" stop-color="#addaff"/><stop offset="0.05" stop-color="#b4d9ff"/><stop offset="0.1" stop-color="#bcd9ff"/><stop offset="0.15" stop-color="#c4d9ff"/><stop offset="0.2" stop-color="#ccd8ff"/><stop offset="0.25" stop-color="#d4d8ff"/><stop offset="0.3" stop-color="#dcd8ff"/><stop offset="0.35" stop-color="#e4d8ff"/><stop offset="0.4" stop-color="#ecd7ff"/><stop offset="0.45" stop-color="#f5d7ff"/><stop offset="0.5" stop-color="#fdd7ff"/><stop offset="0.55" stop-color="#ffd1f8"/><stop offset="0.6" stop-color="#ffcaf0"/><stop offset="0.65" stop-color="#ffc3e9"/><stop offset="0.7" stop-color="#ffbde1"/><stop offset="0.75" stop-color="#ffb7da"/><stop offset="0.8" stop-color="#ffb1d4"/><stop offset="0.85" stop-color="#ffabcd"/><stop offset="0.9" stop-color="#ffa6c7"/><stop offset="0.95" stop-color="#ffa1c2"/><stop offset="1" stop-color="#ff9cbc"/></linearGradient>
<linearGradient id="c44"><stop offset="0" stop-color="#add8ff"/><stop offset="0.05" stop-color="#b4d7ff"/><stop offset="0.1" stop-color="#bcd7ff"/><stop offset="0.15" stop-color="#c4d7ff"/><stop offset="0.2" stop-color="#ccd6ff"/><stop offset="0.25" stop-color="#d4d6ff"/><stop offset="0.3" stop-color="#dcd6ff"/><stop offset="0.35" stop-color="#e4d6ff"/><stop offset="0.4" stop-color="#ecd5ff"/><stop offset="0.45" stop-color="#f4d5ff"/><stop offset="0.5" stop-color="#fdd5ff"/><stop offset="0.55" stop-color="#ffcff9"/><stop offset="0.6" stop-color="#ffc8f1"/><stop offset="0.65" stop-color="#ffc1e9"/><stop offset="0.7" stop-color="#ffbbe2"/><stop offset="0.75" stop-color="#ffb5db"/><stop offset="0.8" stop-color="#ffafd4"/><stop offset="0.85" stop-color="#ffaace"/><stop offset="0.9" stop-color="#ffa4c8"/><stop offset="0.95" stop-color="#ff9fc2"/><stop offset="1" stop-color="#ff9bbc"/></linearGradient>
<linearGradient id="c45"><stop offset="0" stop-color="#add6ff"/><stop offset="0.05" stop-color="#b4d5ff"/><stop offset="0.1" stop-color="#bcd5ff"/><stop offset="0.15" stop-color="#c4d5ff"/><stop offset="0.2" stop-color="#ccd4ff"/><stop offset="0.25" stop-color="#d4d4ff"/><stop offset="0.3" stop-color="#dcd4ff"/><stop offset="0.35" stop-color="#e4d4ff"/><stop offset="0.4" stop-color="#ecd3ff"/><stop offset="0.45" stop-color="#f4d3ff"/><stop offset="0.5" stop-color="#fdd3ff"/><stop offset="0.55" stop-color="#ffcdf9"/><stop offset="0.6" stop-color="#ffc6f1"/><stop offset="0.65" stop-color="#ffc0e9"/><stop offset="0.7" stop-color="#ffb9e2"/><stop offset="0.75" stop-color="#ffb3db"/><stop offset="0.8" stop-color="#ffaed4"/><stop offset="0.85" stop-color="#ffa8ce"/><stop offset="0.9" stop-color="#ffa3c8"/><stop offset="0.95" stop-color="#ff9ec2"/><stop offset="1" stop-color="#ff99bd"/></linearGradient>
<linearGradient id="c46"><stop offset="0" stop-color="#add4ff"/><stop offset="0.05" stop-color="#b5d3ff"/><stop offset="0.1" stop-color="#bcd3ff"/><stop offset="0.15" stop-color="#c4d3ff"/><stop offset="0.2" stop-color="#ccd3ff"/><stop offset="0.25" stop-color="#d3d2ff"/><stop offset="0.3" stop-color="#dbd2ff"/><stop offset="0.35" stop-color="#e4d2ff"/><stop offset="0.4" stop-color="#ecd1ff"/><stop offset="0.45" stop-color="#f4d1ff"/><stop offset="0.5" stop-color="#fdd1ff"/><stop offset="0.55" stop-color="#ffcbf9"/><stop offset="0.6" stop-color="#ffc4f1"/><stop offset="0.65" stop-color="#ffbee9"/><stop offset="0.7" stop-color="#ffb8e2"/><stop offset="0.75" stop-color="#ffb2db"/><stop offset="0.8" stop-color="#ffacd5"/><stop offset="0.85" stop-color="#ffa7ce"/><stop offset="0.9" stop-color="#ffa1c8"/><stop offset="0.95" stop-color="#ff9cc2"/><stop offset="1" stop-color="#ff98bd"/></linearGradient>
<linearGradient id="c47"><stop offset="0" stop-color="#add2ff"/><stop offset="0.05" stop-color="#b5d2ff"/><stop offset="0.1" stop-color="#bcd1ff"/><stop offset="0.15" stop-color="#c4d1ff"/><stop offset="0.2" stop-color="#ccd1ff"/><stop offset="0.25" stop-color="#d3d0ff"/><stop offset="0.3" stop-color="#dbd0ff"/><stop offset="0.35" stop-color="#e4d0ff"/><stop offset="0.4" stop-color="#eccfff"/><stop offset="0.45" stop-color="#f4cfff"/><stop offset="0.5" stop-color="#fccfff"/><stop offset="0.55" stop-color="#ffc9f9"/><stop offset="0.6" stop-color="#ffc3f1"/><stop offset="0.65" stop-color="#ffbcea"/><stop offset="0.7" stop-color="#ffb6e2"/><stop offset="0.75" stop-color="#ffb0db"/><stop offset="0.8" stop-color="#ffaad5"/><stop offset="0.85" stop-color="#ffa5ce"/><stop offset="0.9" stop-color="#ffa0c8"/><stop offset="0.95" stop-color="#ff9bc3"/><stop offset="1" stop-color="#ff96bd"/></linearGradient>
<linearGradient id="c48"><stop offset="0" stop-color="#add0ff"/><stop offset="0.05" stop-color="#b5d0ff"/><stop offset="0.1" stop-color="#bccfff"/><stop offset="0.15" stop-color="#c4cfff"/><stop offset="0.2" stop-color="#cccfff"/><stop offset="0.25" stop-color="#d3ceff"/><stop offset="0.3" stop-color="#dbceff"/><stop offset="0.35" stop-color="#e3ceff"/><stop offset="0.4" stop-color="#eccdff"/><stop offset="0.45" stop-color="#f4cdff"/><stop offset="0.5" stop-color="#fcccff"/><stop offset="0.55" stop-color="#ffc8f9"/><stop offset="0.6" stop-color="#ffc1f1"/><stop offset="0.65" stop-color="#ffbaea"/><stop offset="0.7" stop-color="#ffb4e2"/><stop offset="0.75" stop-color="#ffaedc"/><stop offset="0.8" stop-color="#ffa9d5"/><stop offset="0.85" stop-color="#ffa4cf"/><stop offset="0.9" stop-color="#ff9fc9"/><stop offset="0.95" stop-color="#ff9ac3"/><stop offset="1" stop-color="#ff95bd"/></linearGradient>
<linearGradient id="c49"><stop offset="0" stop-color="#adceff"/><stop offset="0.05" stop-color="#b5ceff"/><stop offset="0.1" stop-color="#bccdff"/><stop offset="0.15" stop-color="#c4cdff"/><stop offset="0.2" stop-color="#cccdff"/><stop offset="0.25" stop-color="#d3ccff"/><stop offset="0.3" stop-color="#dbccff"/><stop offset="0.35" stop-color="#e3ccff"/><stop offset="0.4" stop-color="#eccbff"/><stop offset="0.45" stop-color="#f4cbff"/><stop offset="0.5" stop-color="#fccbff"/><stop offset="0.55" stop-color="#ffc6f9"/><stop offset="0.6" stop-color="#ffbff2"/><stop offset="0.65" stop-color="#ffb9ea"/><stop offset="0.7" stop-color="#ffb3e3"/><stop offset="0.75" stop-color="#ffaddc"/><stop offset="0.8" stop-color="#ffa7d5"/><stop offset="0.85" stop-color="#ffa2cf"/><stop offset="0.9" stop-color="#ff9dc9"/><stop offset="0.95" stop-color="#ff98c3"/><stop offset="1" stop-color="#ff94be"/></linearGradient>
<linearGradient id="c50"><stop offset="0" stop-color="#aecdff"/><stop offset="0.05" stop-color="#b5ccff"/><stop offset="0.1" stop-color="#bcccff"/><stop offset="0.15" stop-color="#c4ccff"/><stop offset="0.2" stop-color="#cccbff"/><stop offset="0.25" stop-color="#d3cbff"/><stop offset="0.3" stop-color="#dbcbff"/><stop offset="0.35" stop-color="#e3caff"/><stop offset="0.4" stop-color="#ebcaff"/><stop offset="0.45" stop-color="#f4caff"/><stop offset="0.5" stop-color="#fcc9ff"/><stop offset="0.55" stop-color="#ffc5fa"/><stop offset="0.6" stop-color="#ffbef2"/><stop offset="0.65" stop-color="#ffb8ea"/><stop offset="0.7" stop-color="#ffb2e3"/><stop offset="0.75" stop-color="#ffacdc"/><stop offset="0.8" stop-color="#ffa6d5"/><stop offset="0.85" stop-color="#ffa1cf"/><stop offset="0.9" stop-color="#ff9cc9"/><stop offset="0.95" stop-color="#ff97c3"/><stop offset="1" stop-color="#ff93be"/></linearGradient>
<clipPath id="cC"><rect x="356.5" y="625.5" width="228.5" height="151.0"/></clipPath>
</defs>
<g shape-rendering="crispEdges">
<rect x="356.5" y="625.5" width="228.5" height="3.6" fill="url(#c0)"/>
<rect x="356.5" y="628.5" width="228.5" height="3.6" fill="url(#c1)"/>
<rect x="356.5" y="631.5" width="228.5" height="3.6" fill="url(#c2)"/>
<rect x="356.5" y="634.5" width="228.5" height="3.6" fill="url(#c3)"/>
<rect x="356.5" y="637.5" width="228.5" height="3.6" fill="url(#c4)"/>
<rect x="356.5" y="640.5" width="228.5" height="3.6" fill="url(#c5)"/>
<rect x="356.5" y="643.5" width="228.5" height="3.6" fill="url(#c6)"/>
<rect x="356.5" y="646.5" width="228.5" height="3.6" fill="url(#c7)"/>
<rect x="356.5" y="649.5" width="228.5" height="3.6" fill="url(#c8)"/>
<rect x="356.5" y="652.5" width="228.5" height="3.6" fill="url(#c9)"/>
<rect x="356.5" y="655.5" width="228.5" height="3.6" fill="url(#c10)"/>
<rect x="356.5" y="658.5" width="228.5" height="3.6" fill="url(#c11)"/>
<rect x="356.5" y="661.5" width="228.5" height="3.6" fill="url(#c12)"/>
<rect x="356.5" y="664.5" width="228.5" height="3.6" fill="url(#c13)"/>
<rect x="356.5" y="667.5" width="228.5" height="3.6" fill="url(#c14)"/>
<rect x="356.5" y="670.5" width="228.5" height="3.6" fill="url(#c15)"/>
<rect x="356.5" y="673.5" width="228.5" height="3.6" fill="url(#c16)"/>
<rect x="356.5" y="676.5" width="228.5" height="3.6" fill="url(#c17)"/>
<rect x="356.5" y="679.5" width="228.5" height="3.6" fill="url(#c18)"/>
<rect x="356.5" y="682.5" width="228.5" height="3.6" fill="url(#c19)"/>
<rect x="356.5" y="685.5" width="228.5" height="3.6" fill="url(#c20)"/>
<rect x="356.5" y="688.5" width="228.5" height="3.6" fill="url(#c21)"/>
<rect x="356.5" y="691.5" width="228.5" height="3.6" fill="url(#c22)"/>
<rect x="356.5" y="694.5" width="228.5" height="3.6" fill="url(#c23)"/>
<rect x="356.5" y="697.5" width="228.5" height="3.6" fill="url(#c24)"/>
<rect x="356.5" y="700.5" width="228.5" height="3.6" fill="url(#c25)"/>
<rect x="356.5" y="703.5" width="228.5" height="3.6" fill="url(#c26)"/>
<rect x="356.5" y="706.5" width="228.5" height="3.6" fill="url(#c27)"/>
<rect x="356.5" y="709.5" width="228.5" height="3.6" fill="url(#c28)"/>
<rect x="356.5" y="712.5" width="228.5" height="3.6" fill="url(#c29)"/>
<rect x="356.5" y="715.5" width="228.5" height="3.6" fill="url(#c30)"/>
<rect x="356.5" y="718.5" width="228.5" height="3.6" fill="url(#c31)"/>
<rect x="356.5" y="721.5" width="228.5" height="3.6" fill="url(#c32)"/>
<rect x="356.5" y="724.5" width="228.5" height="3.6" fill="url(#c33)"/>
<rect x="356.5" y="727.5" width="228.5" height="3.6" fill="url(#c34)"/>
<rect x="356.5" y="730.5" width="228.5" height="3.6" fill="url(#c35)"/>
<rect x="356.5" y="733.5" width="228.5" height="3.6" fill="url(#c36)"/>
<rect x="356.5" y="736.5" width="228.5" height="3.6" fill="url(#c37)"/>
<rect x="356.5" y="739.5" width="228.5" height="3.6" fill="url(#c38)"/>
<rect x="356.5" y="742.5" width="228.5" height="3.6" fill="url(#c39)"/>
<rect x="356.5" y="745.5" width="228.5" height="3.6" fill="url(#c40)"/>
<rect x="356.5" y="748.5" width="228.5" height="3.6" fill="url(#c41)"/>
<rect x="356.5" y="751.5" width="228.5" height="3.6" fill="url(#c42)"/>
<rect x="356.5" y="754.5" width="228.5" height="3.6" fill="url(#c43)"/>
<rect x="356.5" y="757.5" width="228.5" height="3.6" fill="url(#c44)"/>
<rect x="356.5" y="760.5" width="228.5" height="3.6" fill="url(#c45)"/>
<rect x="356.5" y="763.5" width="228.5" height="3.6" fill="url(#c46)"/>
<rect x="356.5" y="766.5" width="228.5" height="3.6" fill="url(#c47)"/>
<rect x="356.5" y="769.5" width="228.5" height="3.6" fill="url(#c48)"/>
<rect x="356.5" y="772.5" width="228.5" height="3.6" fill="url(#c49)"/>
<rect x="356.5" y="775.5" width="228.5" height="1.6" fill="url(#c50)"/>
</g>
<rect x="356.0" y="625.0" width="229.5" height="152.0" fill="none" stroke="#777" stroke-width="1.2"/>
<polyline clip-path="url(#cC)" points="356.8,799.4 360.6,796.6 364.4,793.7 368.2,790.9 372.0,788.0 375.8,785.2 379.6,782.4 383.4,779.6 387.2,776.9 391.0,774.1 394.8,771.4 398.6,768.6 402.4,765.9 406.2,763.2 410.0,760.5 413.8,757.8 417.6,755.1 421.4,752.5 425.2,749.8 429.0,747.2 432.8,744.6 436.6,742.0 440.4,739.4 444.2,736.8 448.0,734.3 451.8,731.7 455.6,729.2 459.4,726.6 463.2,724.1 467.0,721.6 470.8,719.1 474.6,716.7 478.4,714.2 482.2,711.7 486.0,709.3 489.8,706.9 493.6,704.5 497.4,702.1 501.2,699.7 505.0,697.3 508.8,694.9 512.6,692.6 516.4,690.2 520.2,687.9 524.0,685.6 527.8,683.3 531.6,681.0 535.4,678.7 539.2,676.4 543.0,674.2 546.8,671.9 550.6,669.7 554.4,667.5 558.2,665.3 562.0,663.1 565.8,660.9 569.6,658.7 573.4,656.6 577.2,654.4 581.0,652.3 584.8,650.2" fill="none" stroke="#000" stroke-width="2.7"/>
<circle cx="476" cy="678.7" r="4.6" fill="#383838" stroke="#111" stroke-width="1"/>
<circle cx="462.9" cy="679.8" r="4.6" fill="#424242" stroke="#111" stroke-width="1"/>
<circle cx="450.7" cy="699.4" r="4.6" fill="#646464" stroke="#111" stroke-width="1"/>
<circle cx="454.8" cy="698.2" r="4.6" fill="#8e8e8e" stroke="#111" stroke-width="1"/>
<circle cx="455.3" cy="690.2" r="4.6" fill="#b4b4b4" stroke="#111" stroke-width="1"/>
<circle cx="456.7" cy="692.9" r="4.6" fill="#dcdcdc" stroke="#111" stroke-width="1"/>
<circle cx="439.4" cy="709.2" r="4.6" fill="#111" stroke="#111" stroke-width="1"/>
<circle cx="439.4" cy="711.5" r="4.6" fill="#ffffff" stroke="#111" stroke-width="1"/>
<rect x="463.2" y="694.3" width="13.6" height="11.6" fill="#fff" stroke="#000" stroke-width="1.9"/>
<line x1="365.9" y1="776.5" x2="365.9" y2="781.5" stroke="#ccc" stroke-width="1.2"/>
<text transform="translate(365.9 796) scale(1.130 1)" font-size="12" text-anchor="middle">0.29</text>
<line x1="411.5" y1="776.5" x2="411.5" y2="781.5" stroke="#ccc" stroke-width="1.2"/>
<text transform="translate(411.5 796) scale(1.130 1)" font-size="12" text-anchor="middle">0.3</text>
<line x1="457.1" y1="776.5" x2="457.1" y2="781.5" stroke="#ccc" stroke-width="1.2"/>
<text transform="translate(457.1 796) scale(1.130 1)" font-size="12" text-anchor="middle">0.31</text>
<line x1="502.7" y1="776.5" x2="502.7" y2="781.5" stroke="#ccc" stroke-width="1.2"/>
<text transform="translate(502.7 796) scale(1.130 1)" font-size="12" text-anchor="middle">0.32</text>
<line x1="548.3" y1="776.5" x2="548.3" y2="781.5" stroke="#ccc" stroke-width="1.2"/>
<text transform="translate(548.3 796) scale(1.130 1)" font-size="12" text-anchor="middle">0.33</text>
<line x1="351.5" y1="759.2" x2="356.5" y2="759.2" stroke="#ccc" stroke-width="1.2"/>
<text transform="translate(350.5 763.5) scale(1.130 1)" font-size="12" text-anchor="end">0.31</text>
<line x1="351.5" y1="728.8" x2="356.5" y2="728.8" stroke="#ccc" stroke-width="1.2"/>
<text transform="translate(350.5 733.1) scale(1.130 1)" font-size="12" text-anchor="end">0.32</text>
<line x1="351.5" y1="698.4" x2="356.5" y2="698.4" stroke="#ccc" stroke-width="1.2"/>
<text transform="translate(350.5 702.7) scale(1.130 1)" font-size="12" text-anchor="end">0.33</text>
<line x1="351.5" y1="668.0" x2="356.5" y2="668.0" stroke="#ccc" stroke-width="1.2"/>
<text transform="translate(350.5 672.3) scale(1.130 1)" font-size="12" text-anchor="end">0.34</text>
<line x1="351.5" y1="637.6" x2="356.5" y2="637.6" stroke="#ccc" stroke-width="1.2"/>
<text transform="translate(350.5 641.9) scale(1.130 1)" font-size="12" text-anchor="end">0.35</text>
</svg>
<svg width="1600" height="870" font-family="Liberation Sans" font-size="13" fill="#efefef">
<defs><linearGradient id="th" x1="0" x2="0" y1="0" y2="1"><stop offset="0" stop-color="#2e2e2e"/><stop offset=".45" stop-color="#2a2a2a"/><stop offset=".55" stop-color="#101010"/><stop offset="1" stop-color="#050505"/></linearGradient></defs>
<rect x="609" y="617" width="828" height="25" fill="url(#th)"/>
<rect x="596" y="617" width="13" height="25" fill="#000"/>
<text transform="translate(737.5 635) scale(1.155 1)" font-size="13" stroke="#efefef" stroke-width=".25">0</text>
<text transform="translate(809.5 635) scale(1.155 1)" font-size="13" stroke="#efefef" stroke-width=".25">10</text>
<text transform="translate(872.6 635) scale(1.155 1)" font-size="13" stroke="#efefef" stroke-width=".25">20</text>
<text transform="translate(935.8 635) scale(1.155 1)" font-size="13" stroke="#efefef" stroke-width=".25">30</text>
<text transform="translate(999 635) scale(1.155 1)" font-size="13" stroke="#efefef" stroke-width=".25">40</text>
<text transform="translate(1062.1 635) scale(1.155 1)" font-size="13" stroke="#efefef" stroke-width=".25">50</text>
<text transform="translate(1125.2 635) scale(1.155 1)" font-size="13" stroke="#efefef" stroke-width=".25">60</text>
<text transform="translate(1188.4 635) scale(1.155 1)" font-size="13" stroke="#efefef" stroke-width=".25">70</text>
<text transform="translate(1251.5 635) scale(1.155 1)" font-size="13" stroke="#efefef" stroke-width=".25">80</text>
<text transform="translate(1314.7 635) scale(1.155 1)" font-size="13" stroke="#efefef" stroke-width=".25">90</text>
<text transform="translate(1377.8 635) scale(1.155 1)" font-size="13" stroke="#efefef" stroke-width=".25">100</text>
<rect x="609" y="642" width="828" height="23.05" fill="#3e3e3e"/>
<rect x="596" y="642" width="13" height="23.05" fill="#2c2c2c"/>
<text transform="translate(613 658.8) scale(1.053 1)" font-size="13" stroke="#efefef" stroke-width=".25">x: CIE31</text>
<text transform="translate(737.5 658.8) scale(1.155 1)" font-size="13" stroke="#efefef" stroke-width=".25">0.26</text>
<text transform="translate(809.5 658.8) scale(1.155 1)" font-size="13" stroke="#efefef" stroke-width=".25">0.31</text>
<text transform="translate(872.6 658.8) scale(1.155 1)" font-size="13" stroke="#efefef" stroke-width=".25">0.31</text>
<text transform="translate(935.8 658.8) scale(1.155 1)" font-size="13" stroke="#efefef" stroke-width=".25">0.31</text>
<text transform="translate(999 658.8) scale(1.155 1)" font-size="13" stroke="#efefef" stroke-width=".25">0.31</text>
<text transform="translate(1062.1 658.8) scale(1.155 1)" font-size="13" stroke="#efefef" stroke-width=".25">0.31</text>
<text transform="translate(1125.2 658.8) scale(1.155 1)" font-size="13" stroke="#efefef" stroke-width=".25">0.31</text>
<text transform="translate(1188.4 658.8) scale(1.155 1)" font-size="13" stroke="#efefef" stroke-width=".25">0.31</text>
<text transform="translate(1251.5 658.8) scale(1.155 1)" font-size="13" stroke="#efefef" stroke-width=".25">0.31</text>
<text transform="translate(1314.7 658.8) scale(1.155 1)" font-size="13" stroke="#efefef" stroke-width=".25">0.31</text>
<text transform="translate(1377.8 658.8) scale(1.155 1)" font-size="13" stroke="#efefef" stroke-width=".25">0.31</text>
<rect x="609" y="664.75" width="828" height="23.05" fill="#808080"/>
<rect x="596" y="664.75" width="13" height="23.05" fill="#202020"/>
<text transform="translate(613 681.5) scale(1.053 1)" font-size="13" stroke="#efefef" stroke-width=".25">y: CIE31</text>
<text transform="translate(737.5 681.5) scale(1.155 1)" font-size="13" stroke="#efefef" stroke-width=".25">0.28</text>
<text transform="translate(809.5 681.5) scale(1.155 1)" font-size="13" stroke="#efefef" stroke-width=".25">0.33</text>
<text transform="translate(872.6 681.5) scale(1.155 1)" font-size="13" stroke="#efefef" stroke-width=".25">0.34</text>
<text transform="translate(935.8 681.5) scale(1.155 1)" font-size="13" stroke="#efefef" stroke-width=".25">0.34</text>
<text transform="translate(999 681.5) scale(1.155 1)" font-size="13" stroke="#efefef" stroke-width=".25">0.33</text>
<text transform="translate(1062.1 681.5) scale(1.155 1)" font-size="13" stroke="#efefef" stroke-width=".25">0.33</text>
<text transform="translate(1125.2 681.5) scale(1.155 1)" font-size="13" stroke="#efefef" stroke-width=".25">0.33</text>
<text transform="translate(1188.4 681.5) scale(1.155 1)" font-size="13" stroke="#efefef" stroke-width=".25">0.33</text>
<text transform="translate(1251.5 681.5) scale(1.155 1)" font-size="13" stroke="#efefef" stroke-width=".25">0.33</text>
<text transform="translate(1314.7 681.5) scale(1.155 1)" font-size="13" stroke="#efefef" stroke-width=".25">0.33</text>
<text transform="translate(1377.8 681.5) scale(1.155 1)" font-size="13" stroke="#efefef" stroke-width=".25">0.33</text>
<rect x="609" y="687.5" width="828" height="23.05" fill="#3e3e3e"/>
<rect x="596" y="687.5" width="13" height="23.05" fill="#2c2c2c"/>
<text transform="translate(613 704.3) scale(1.100 1)" font-size="13" stroke="#efefef" stroke-width=".25">Y</text>
<text transform="translate(737.5 704.3) scale(1.155 1)" font-size="13" stroke="#efefef" stroke-width=".25">0.44</text>
<text transform="translate(809.5 704.3) scale(1.155 1)" font-size="13" stroke="#efefef" stroke-width=".25">2.61</text>
<text transform="translate(872.6 704.3) scale(1.155 1)" font-size="13" stroke="#efefef" stroke-width=".25">10.18</text>
<text transform="translate(935.8 704.3) scale(1.155 1)" font-size="13" stroke="#efefef" stroke-width=".25">24.68</text>
<text transform="translate(999 704.3) scale(1.155 1)" font-size="13" stroke="#efefef" stroke-width=".25">46.84</text>
<text transform="translate(1062.1 704.3) scale(1.155 1)" font-size="13" stroke="#efefef" stroke-width=".25">74.94</text>
<text transform="translate(1125.2 704.3) scale(1.155 1)" font-size="13" stroke="#efefef" stroke-width=".25">110.74</text>
<text transform="translate(1188.4 704.3) scale(1.155 1)" font-size="13" stroke="#efefef" stroke-width=".25">154.38</text>
<text transform="translate(1251.5 704.3) scale(1.155 1)" font-size="13" stroke="#efefef" stroke-width=".25">207.50</text>
<text transform="translate(1314.7 704.3) scale(1.155 1)" font-size="13" stroke="#efefef" stroke-width=".25">269.67</text>
<text transform="translate(1377.8 704.3) scale(1.155 1)" font-size="13" stroke="#efefef" stroke-width=".25">337.93</text>
<rect x="609" y="710.25" width="828" height="23.05" fill="#808080"/>
<rect x="596" y="710.25" width="13" height="23.05" fill="#202020"/>
<text transform="translate(613 727) scale(1.141 1)" font-size="13" stroke="#efefef" stroke-width=".25">Target Y</text>
<text transform="translate(737.5 727) scale(1.155 1)" font-size="13" stroke="#efefef" stroke-width=".25">0.44</text>
<text transform="translate(809.5 727) scale(1.155 1)" font-size="13" stroke="#efefef" stroke-width=".25">3.93</text>
<text transform="translate(872.6 727) scale(1.155 1)" font-size="13" stroke="#efefef" stroke-width=".25">11.62</text>
<text transform="translate(935.8 727) scale(1.155 1)" font-size="13" stroke="#efefef" stroke-width=".25">24.83</text>
<text transform="translate(999 727) scale(1.155 1)" font-size="13" stroke="#efefef" stroke-width=".25">45.28</text>
<text transform="translate(1062.1 727) scale(1.155 1)" font-size="13" stroke="#efefef" stroke-width=".25">73.29</text>
<text transform="translate(1125.2 727) scale(1.155 1)" font-size="13" stroke="#efefef" stroke-width=".25">107.95</text>
<text transform="translate(1188.4 727) scale(1.155 1)" font-size="13" stroke="#efefef" stroke-width=".25">150.69</text>
<text transform="translate(1251.5 727) scale(1.155 1)" font-size="13" stroke="#efefef" stroke-width=".25">204.23</text>
<text transform="translate(1314.7 727) scale(1.155 1)" font-size="13" stroke="#efefef" stroke-width=".25">267.50</text>
<text transform="translate(1377.8 727) scale(1.155 1)" font-size="13" stroke="#efefef" stroke-width=".25">337.93</text>
<rect x="609" y="733" width="828" height="23.05" fill="#3e3e3e"/>
<rect x="596" y="733" width="13" height="23.05" fill="#2c2c2c"/>
<text transform="translate(613 749.8) scale(1.198 1)" font-size="13" stroke="#efefef" stroke-width=".25">Gamma Log/Log</text>
<text transform="translate(737.5 749.8) scale(1.155 1)" font-size="13" stroke="#efefef" stroke-width=".25">0.95</text>
<text transform="translate(809.5 749.8) scale(1.155 1)" font-size="13" stroke="#efefef" stroke-width=".25">2.13</text>
<text transform="translate(872.6 749.8) scale(1.155 1)" font-size="13" stroke="#efefef" stroke-width=".25">2.18</text>
<text transform="translate(935.8 749.8) scale(1.155 1)" font-size="13" stroke="#efefef" stroke-width=".25">2.16</text>
<text transform="translate(999 749.8) scale(1.155 1)" font-size="13" stroke="#efefef" stroke-width=".25">2.16</text>
<text transform="translate(1062.1 749.8) scale(1.155 1)" font-size="13" stroke="#efefef" stroke-width=".25">2.19</text>
<text transform="translate(1125.2 749.8) scale(1.155 1)" font-size="13" stroke="#efefef" stroke-width=".25">2.18</text>
<text transform="translate(1188.4 749.8) scale(1.155 1)" font-size="13" stroke="#efefef" stroke-width=".25">2.18</text>
<text transform="translate(1251.5 749.8) scale(1.155 1)" font-size="13" stroke="#efefef" stroke-width=".25">2.19</text>
<text transform="translate(1314.7 749.8) scale(1.155 1)" font-size="13" stroke="#efefef" stroke-width=".25">2.19</text>
<text transform="translate(1377.8 749.8) scale(1.155 1)" font-size="13" stroke="#efefef" stroke-width=".25">2.27</text>
<rect x="609" y="755.75" width="828" height="23.05" fill="#808080"/>
<rect x="596" y="755.75" width="13" height="23.05" fill="#202020"/>
<text transform="translate(613 772.5) scale(1.011 1)" font-size="13" stroke="#efefef" stroke-width=".25">CCT</text>
<text transform="translate(737.5 772.5) scale(1.155 1)" font-size="13" stroke="#efefef" stroke-width=".25">12747.00</text>
<text transform="translate(809.5 772.5) scale(1.155 1)" font-size="13" stroke="#efefef" stroke-width=".25">6902.00</text>
<text transform="translate(872.6 772.5) scale(1.155 1)" font-size="13" stroke="#efefef" stroke-width=".25">6385.00</text>
<text transform="translate(935.8 772.5) scale(1.155 1)" font-size="13" stroke="#efefef" stroke-width=".25">6529.00</text>
<text transform="translate(999 772.5) scale(1.155 1)" font-size="13" stroke="#efefef" stroke-width=".25">6749.00</text>
<text transform="translate(1062.1 772.5) scale(1.155 1)" font-size="13" stroke="#efefef" stroke-width=".25">6735.00</text>
<text transform="translate(1125.2 772.5) scale(1.155 1)" font-size="13" stroke="#efefef" stroke-width=".25">6671.00</text>
<text transform="translate(1188.4 772.5) scale(1.155 1)" font-size="13" stroke="#efefef" stroke-width=".25">6656.00</text>
<text transform="translate(1251.5 772.5) scale(1.155 1)" font-size="13" stroke="#efefef" stroke-width=".25">6612.00</text>
<text transform="translate(1314.7 772.5) scale(1.155 1)" font-size="13" stroke="#efefef" stroke-width=".25">6644.00</text>
<text transform="translate(1377.8 772.5) scale(1.155 1)" font-size="13" stroke="#efefef" stroke-width=".25">6916.00</text>
<rect x="609" y="778.5" width="828" height="23.05" fill="#3e3e3e"/>
<rect x="596" y="778.5" width="13" height="23.05" fill="#2c2c2c"/>
<text transform="translate(613 795.3) scale(1.132 1)" font-size="13" stroke="#efefef" stroke-width=".25">ΔE 2000</text>
<text transform="translate(737.5 795.3) scale(1.155 1)" font-size="13" stroke="#efefef" stroke-width=".25">1.05</text>
<text transform="translate(809.5 795.3) scale(1.155 1)" font-size="13" stroke="#efefef" stroke-width=".25">2.15</text>
<text transform="translate(872.6 795.3) scale(1.155 1)" font-size="13" stroke="#efefef" stroke-width=".25">1.93</text>
<text transform="translate(935.8 795.3) scale(1.155 1)" font-size="13" stroke="#efefef" stroke-width=".25">2.58</text>
<text transform="translate(999 795.3) scale(1.155 1)" font-size="13" stroke="#efefef" stroke-width=".25">2.09</text>
<text transform="translate(1062.1 795.3) scale(1.155 1)" font-size="13" stroke="#efefef" stroke-width=".25">2.16</text>
<text transform="translate(1125.2 795.3) scale(1.155 1)" font-size="13" stroke="#efefef" stroke-width=".25">2.17</text>
<text transform="translate(1188.4 795.3) scale(1.155 1)" font-size="13" stroke="#efefef" stroke-width=".25">3.77</text>
<text transform="translate(1251.5 795.3) scale(1.155 1)" font-size="13" stroke="#efefef" stroke-width=".25">3.07</text>
<text transform="translate(1314.7 795.3) scale(1.155 1)" font-size="13" stroke="#efefef" stroke-width=".25">3.58</text>
<text transform="translate(1377.8 795.3) scale(1.155 1)" font-size="13" stroke="#efefef" stroke-width=".25">3.44</text>
</svg>
<svg width="1600" height="870" font-family="Liberation Sans" font-size="12" fill="#e6e6e6">
<defs>
<linearGradient id="gb" x1="0" x2="0" y1="0" y2="1"><stop offset="0" stop-color="#a0a0a0"/><stop offset=".08" stop-color="#959595"/><stop offset=".6" stop-color="#6c6c6c"/><stop offset="1" stop-color="#4e4e4e"/></linearGradient>
<linearGradient id="gs" x1="0" x2="0" y1="0" y2="1"><stop offset="0" stop-color="#151515"/><stop offset=".5" stop-color="#262626"/><stop offset="1" stop-color="#353535"/></linearGradient>
<linearGradient id="gt" x1="0" x2="0" y1="0" y2="1"><stop offset="0" stop-color="#a2a2a2"/><stop offset="1" stop-color="#606060"/></linearGradient>
<linearGradient id="gk" x1="0" x2="0" y1="0" y2="1"><stop offset="0" stop-color="#3e3e3e"/><stop offset="1" stop-color="#2a2a2a"/></linearGradient>
<linearGradient id="gn" x1="0" x2="0" y1="0" y2="1"><stop offset="0" stop-color="#969696"/><stop offset="1" stop-color="#626262"/></linearGradient>
<linearGradient id="gc" x1="0" x2="0" y1="0" y2="1"><stop offset="0" stop-color="#5e5e5e"/><stop offset="1" stop-color="#8c8c8c"/></linearGradient>
<linearGradient id="gi" x1="0" x2="0" y1="0" y2="1"><stop offset="0" stop-color="#b4b4b4"/><stop offset=".5" stop-color="#9a9a9a"/><stop offset=".5" stop-color="#888"/><stop offset="1" stop-color="#8a8a8a"/></linearGradient>
<linearGradient id="gk2" x1="0" x2="0" y1="0" y2="1"><stop offset="0" stop-color="#252525"/><stop offset="1" stop-color="#3c3c3c"/></linearGradient>
</defs>
<rect x="1.0" y="808" width="114" height="61" rx="4.5" fill="url(#gb)"/>
<rect x="6.0" y="812.8" width="104.5" height="37" rx="3.5" fill="#000" opacity=".18"/>
<rect x="6.5" y="813.5" width="103.5" height="35.5" rx="3" fill="#000000"/>
<text transform="translate(58.2 864) scale(1.120 1)" font-size="10" text-anchor="middle" fill="#2e2e2e" font-weight="bold">0</text>
<rect x="117.0" y="808" width="114" height="61" rx="4.5" fill="url(#gb)"/>
<rect x="122.0" y="812.8" width="104.5" height="37" rx="3.5" fill="#000" opacity=".18"/>
<rect x="122.5" y="813.5" width="103.5" height="35.5" rx="3" fill="#1a1a1a"/>
<text transform="translate(174.2 864) scale(1.120 1)" font-size="10" text-anchor="middle" fill="#2e2e2e" font-weight="bold">10</text>
<rect x="233.0" y="808" width="114" height="61" rx="4.5" fill="url(#gb)"/>
<rect x="238.0" y="812.8" width="104.5" height="37" rx="3.5" fill="#000" opacity=".18"/>
<rect x="238.5" y="813.5" width="103.5" height="35.5" rx="3" fill="#333333"/>
<text transform="translate(290.2 864) scale(1.120 1)" font-size="10" text-anchor="middle" fill="#2e2e2e" font-weight="bold">20</text>
<rect x="348.5" y="808" width="114" height="61" rx="4.5" fill="url(#gb)"/>
<rect x="353.5" y="812.8" width="104.5" height="37" rx="3.5" fill="#000" opacity=".18"/>
<rect x="354.0" y="813.5" width="103.5" height="35.5" rx="3" fill="#4d4d4d"/>
<text transform="translate(405.7 864) scale(1.120 1)" font-size="10" text-anchor="middle" fill="#2e2e2e" font-weight="bold">30</text>
<rect x="464.5" y="808" width="114" height="61" rx="4.5" fill="url(#gb)"/>
<rect x="469.5" y="812.8" width="104.5" height="37" rx="3.5" fill="#000" opacity=".18"/>
<rect x="470.0" y="813.5" width="103.5" height="35.5" rx="3" fill="#666666"/>
<text transform="translate(521.7 864) scale(1.120 1)" font-size="10" text-anchor="middle" fill="#2e2e2e" font-weight="bold">40</text>
<rect x="580.5" y="808" width="114" height="61" rx="4.5" fill="url(#gb)"/>
<rect x="585.5" y="812.8" width="104.5" height="37" rx="3.5" fill="#000" opacity=".18"/>
<rect x="586.0" y="813.5" width="103.5" height="35.5" rx="3" fill="#808080"/>
<text transform="translate(637.7 864) scale(1.120 1)" font-size="10" text-anchor="middle" fill="#2e2e2e" font-weight="bold">50</text>
<rect x="696.5" y="808" width="114" height="61" rx="4.5" fill="url(#gb)"/>
<rect x="701.5" y="812.8" width="104.5" height="37" rx="3.5" fill="#000" opacity=".18"/>
<rect x="702.0" y="813.5" width="103.5" height="35.5" rx="3" fill="#999999"/>
<text transform="translate(753.7 864) scale(1.120 1)" font-size="10" text-anchor="middle" fill="#2e2e2e" font-weight="bold">60</text>
<rect x="812.5" y="808" width="114" height="61" rx="4.5" fill="url(#gb)"/>
<rect x="817.5" y="812.8" width="104.5" height="37" rx="3.5" fill="#000" opacity=".18"/>
<rect x="818.0" y="813.5" width="103.5" height="35.5" rx="3" fill="#b3b3b3"/>
<text transform="translate(869.7 864) scale(1.120 1)" font-size="10" text-anchor="middle" fill="#2e2e2e" font-weight="bold">70</text>
<rect x="928.0" y="808" width="114" height="61" rx="4.5" fill="url(#gb)"/>
<rect x="933.0" y="812.8" width="104.5" height="37" rx="3.5" fill="#000" opacity=".18"/>
<rect x="933.5" y="813.5" width="103.5" height="35.5" rx="3" fill="#cccccc"/>
<text transform="translate(985.2 864) scale(1.120 1)" font-size="10" text-anchor="middle" fill="#2e2e2e" font-weight="bold">80</text>
<rect x="1044.0" y="808" width="114" height="61" rx="4.5" fill="url(#gb)"/>
<rect x="1049.0" y="812.8" width="104.5" height="37" rx="3.5" fill="#000" opacity=".18"/>
<rect x="1049.5" y="813.5" width="103.5" height="35.5" rx="3" fill="#e6e6e6"/>
<text transform="translate(1101.2 864) scale(1.120 1)" font-size="10" text-anchor="middle" fill="#2e2e2e" font-weight="bold">90</text>
<rect x="1160.0" y="808" width="114" height="61" rx="4.5" fill="url(#gs)"/>
<rect x="1165.5" y="813.5" width="103.5" height="35.5" rx="3" fill="#ffffff"/>
<text transform="translate(1217.2 864) scale(1.120 1)" font-size="10" text-anchor="middle" fill="#fff" font-weight="bold">100</text>
<path d="M1277 826.3V812a4 4 0 0 1 4 -4H1321a4 4 0 0 1 4 4V826.3z" fill="url(#gt)"/>
<rect x="1277" y="827" width="48" height="43" fill="url(#gn)"/>
<circle cx="1301" cy="816.5" r="7" fill="url(#gc)"/><path d="M1296.5 819h9l-4.5-5z" fill="#333"/>
<rect x="1286.5" y="833" width="29" height="29.5" rx="4" fill="url(#gi)" stroke="#1e1e1e" stroke-width="2.2"/>
<rect x="1293.5" y="840" width="15" height="15.5" fill="#000"/>
<path d="M1326 838V812a4 4 0 0 1 4-4H1552.5V838z" fill="url(#gt)"/>
<path d="M1552.5 808H1595a4 4 0 0 1 4 4V838H1552.5z" fill="url(#gk)"/>
<rect x="1371.5" y="808" width="1" height="30" fill="#3a3a3a"/>
<rect x="1417.0" y="808" width="1" height="30" fill="#3a3a3a"/>
<rect x="1462.0" y="808" width="1" height="30" fill="#3a3a3a"/>
<rect x="1507.0" y="808" width="1" height="30" fill="#3a3a3a"/>
<circle cx="1349" cy="823" r="9.8" fill="url(#gc)"/>
<circle cx="1394.75" cy="823" r="9.8" fill="url(#gc)"/>
<circle cx="1440" cy="823" r="9.8" fill="url(#gc)"/>
<circle cx="1485" cy="823" r="9.8" fill="url(#gc)"/>
<circle cx="1530" cy="823" r="9.8" fill="url(#gc)"/>
<circle cx="1575.75" cy="823" r="9.8" fill="url(#gk2)"/>
<rect x="1345.0" y="819" width="8" height="8" fill="#2b2b2b"/>
<path d="M1392.0 818.9v9.8l8.6-4.9z" fill="#2b2b2b"/>
<path d="M1437.0 819h-2v9h2M1443.0 819h2v9h-2" fill="none" stroke="#2b2b2b" stroke-width="2"/><rect x="1437.6" y="822.3" width="1.6" height="1.6" fill="#2b2b2b"/><rect x="1440.8" y="822.3" width="1.6" height="1.6" fill="#2b2b2b"/>
<path d="M1485.0 823c-1.3-2.1-2.6-2.8-3.8-2.8a2.8 2.8 0 0 0 0 5.6c1.2 0 2.5-.7 3.8-2.8c1.3-2.1 2.6-2.8 3.8-2.8a2.8 2.8 0 0 1 0 5.6c-1.2 0-2.5-.7-3.8-2.8z" fill="none" stroke="#2b2b2b" stroke-width="1.4"/>
<g fill="none" stroke="#2b2b2b" stroke-width="2"><path d="M1524.8 822a5.3 5.3 0 0 1 9.2-2.6"/><path d="M1535.2 824a5.3 5.3 0 0 1-9.2 2.6"/></g><path d="M1535.8 816.300v5h-5zM1524.2 829.7v-5h5z" fill="#2b2b2b"/>
<path d="M1571.45 822.6l3.3 4.2l5.7-7" fill="none" stroke="#101010" stroke-width="2.7"/>
<path d="M1326 870V843a4 4 0 0 1 4 -4H1458a4 4 0 0 1 4 4V870z" fill="url(#gn)"/>
<path d="M1463 870V843a4 4 0 0 1 4 -4H1595a4 4 0 0 1 4 4V870z" fill="url(#gn)"/>
<circle cx="1356.5" cy="854" r="10" fill="url(#gc)"/><circle cx="1570" cy="854" r="10" fill="url(#gc)"/>
<path d="M1355.500 849.500l-4 4.500l4 4.500M1360.500 849.500l-4 4.500l4 4.5" fill="none" stroke="#2b2b2b" stroke-width="1.7"/>
<path d="M1566 849.500l4 4.500l-4 4.500M1571 849.500l4 4.500l-4 4.5" fill="none" stroke="#2b2b2b" stroke-width="1.7"/>
<text transform="translate(1382.5 861.5) scale(1.169 1)" font-size="20" fill="#363636" stroke="#363636" stroke-width=".5">Back</text>
<text transform="translate(1489 861.5) scale(1.301 1)" font-size="20" fill="#363636" stroke="#363636" stroke-width=".5">Next</text>
</svg>
</body></html>
